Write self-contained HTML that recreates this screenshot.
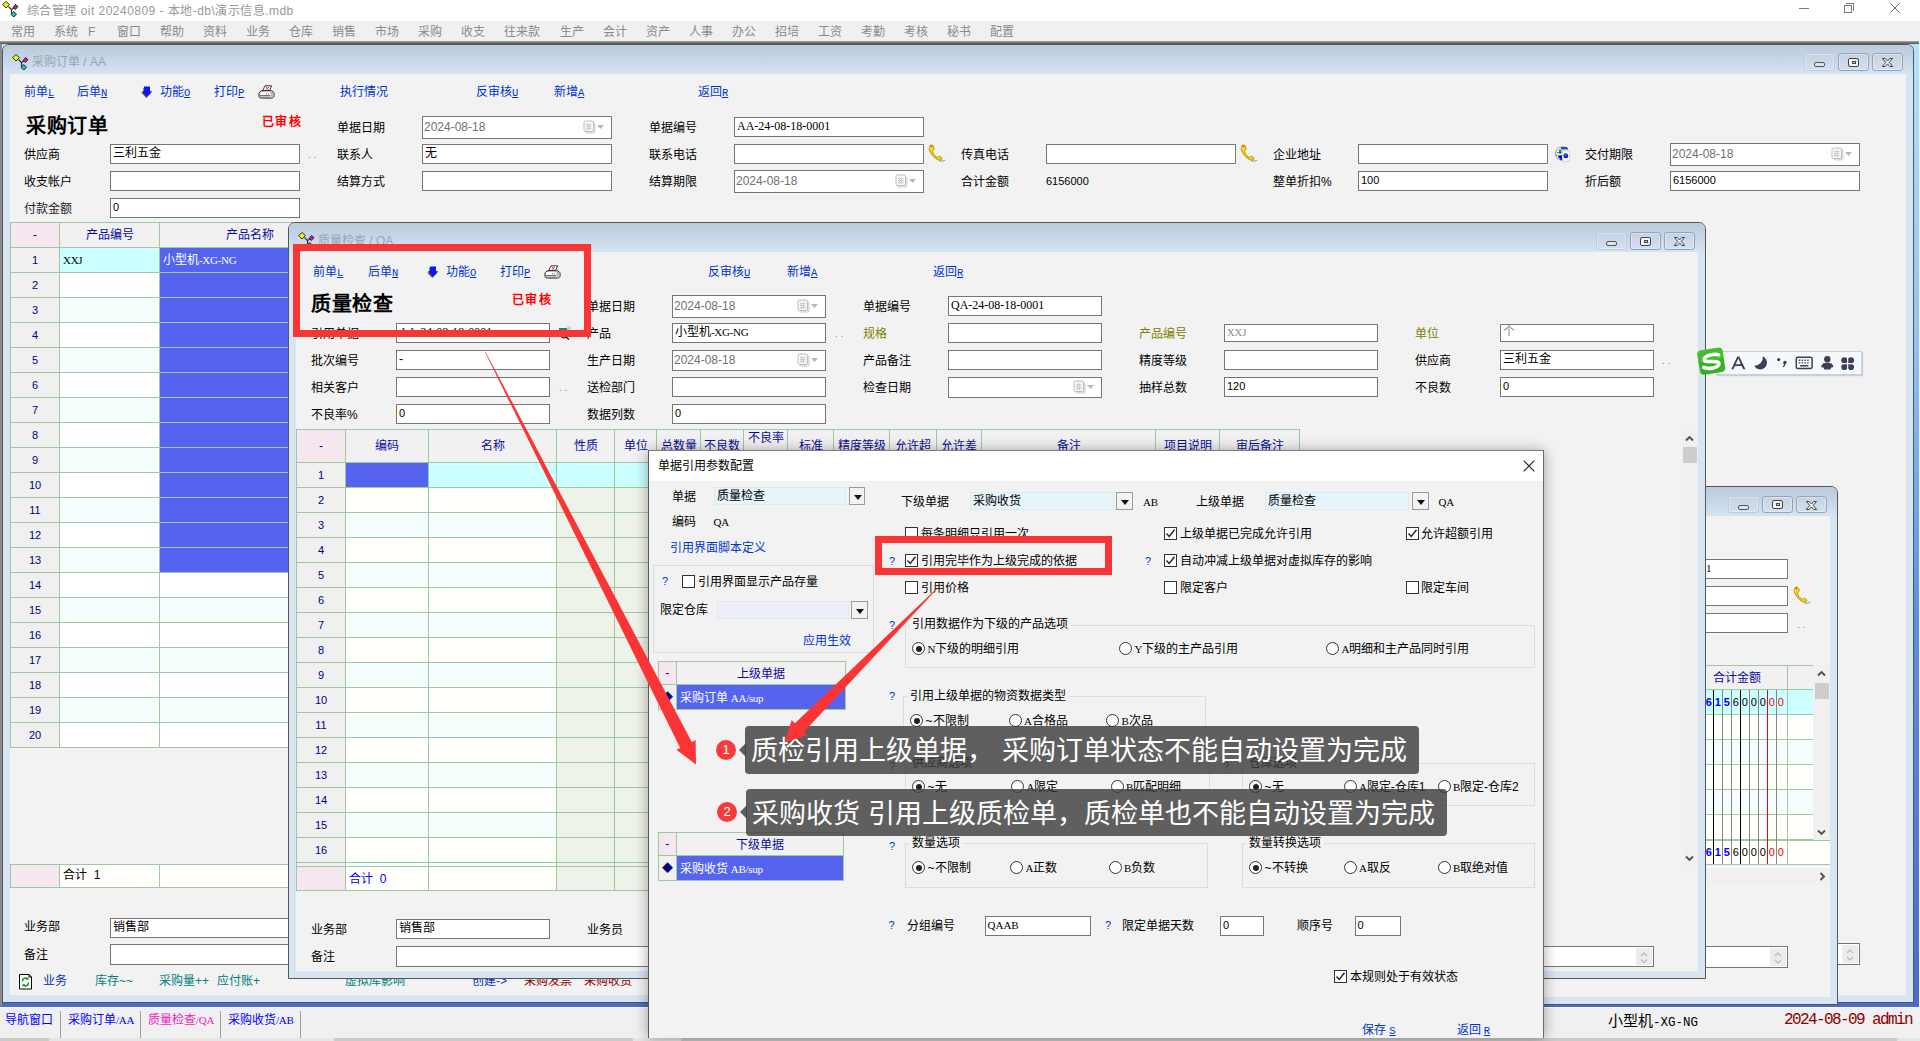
<!DOCTYPE html>
<html lang="zh-CN"><head><meta charset="utf-8"><title>UI</title>
<style>
html,body{margin:0;padding:0}
body{width:1920px;height:1041px;overflow:hidden;position:relative;background:#f0f0f0;font-family:"Liberation Sans",sans-serif;font-size:12px;line-height:16px;color:#000}
div{position:absolute;box-sizing:border-box}
.t{white-space:nowrap;line-height:16px}
.s{font-family:"Liberation Serif",serif;font-size:11px;letter-spacing:-0.3px}
.m{font-family:"Liberation Mono",monospace}
u{text-decoration:underline;font-family:"Liberation Mono",monospace;font-size:10.5px}
.in{border:1px solid #767676;background:#fff;padding-left:2px;white-space:nowrap;overflow:hidden;font-size:12px}
.dt{color:#707070;padding-left:1px}
.dt .cal{position:absolute;right:6px;top:50%;margin-top:-7.5px}
.win{border:1px solid #565656;border-radius:7px 7px 0 0;background:#d7e4f2;overflow:hidden}
.wtitle{background:linear-gradient(#bccbdc,#c9d8e8 55%,#d7e4f2)}
.wc{background:#f2f2f2}
.h1{font-family:"Liberation Serif",serif;font-weight:bold;font-size:20px;line-height:24px;white-space:nowrap;letter-spacing:0.5px}
.red{color:#ff0000;font-weight:bold;white-space:nowrap;letter-spacing:1.4px}
.cb{width:13px;height:13px;border:1px solid #333;background:#fff}
.rb{width:13px;height:13px;border:1px solid #333;background:#fff;border-radius:50%}
.rb i{position:absolute;left:2.5px;top:2.5px;width:6px;height:6px;border-radius:50%;background:#222}
.gb{border:1px solid #dcdcdc}
.q{color:#0033cc;font-size:11px}
.cmb{background:#e6f4fb;border:1px solid #dfe9f0;padding-left:2px;line-height:17px;white-space:nowrap}
.cbtn{border:1px solid #9b9b9b;background:#f2f2f2}
.cbtn:after{content:"";position:absolute;left:4px;top:7px;border:4px solid transparent;border-top:5px solid #111;border-bottom:0}
.call{background:rgba(60,60,60,.81);border-radius:4px;color:#fff;font-size:27px;line-height:51px;white-space:nowrap;padding-left:6px;overflow:hidden}
.num{background:#f53b3b;border-radius:50%;color:#fff;text-align:center;font-size:13px;line-height:20px;width:20px;height:20px}
</style></head>
<body>

<div style="left:0px;top:0px;width:1920px;height:21px;background:#fff"></div>
<div style="left:2px;top:1px;width:17px;height:17px;"><svg width="17" height="17" viewBox="0 0 17 17"><path d="M6.5 5.5L9.5 8.5V12L11 13.5" fill="none" stroke="#333" stroke-width="1.2"/><path d="M9.5 8.5L12.5 6.5" fill="none" stroke="#333" stroke-width="1.2"/><path d="M4 0.5L7.5 3.5L4 7L0.5 3.5Z" fill="#f2f200" stroke="#222" stroke-width="0.9"/><path d="M13.5 3.5L16 5.5L13.5 8.5L11 6.5Z" fill="#e0109a" stroke="#222" stroke-width="0.9"/><path d="M11.5 10.5L14.5 13L12 16L9 13.5Z" fill="#14c8c8" stroke="#222" stroke-width="0.9"/></svg></div>
<div class="t" style="left:27px;top:2.5px;color:#999;letter-spacing:0.47px">综合管理 oit 20240809 - 本地-db\演示信息.mdb</div>
<div style="left:1799px;top:8px;width:10px;height:1px;background:#7a7a7a"></div>
<div style="left:1844px;top:5px;width:8px;height:8px;border:1px solid #7a7a7a"></div>
<div style="left:1846px;top:3px;width:8px;height:8px;border:1px solid #7a7a7a;border-left:0;border-bottom:0"></div>
<svg style="position:absolute;left:1890px;top:3px" width="10" height="10" viewBox="0 0 10 10"><path d="M0.3 0.3L9.7 9.7M9.7 0.3L0.3 9.7" stroke="#6a6a6a" stroke-width="1"/></svg>
<div style="left:0px;top:21px;width:1920px;height:21px;background:#f0f0f0"></div>
<div class="t" style="left:11px;top:23.5px;color:#8a8a8a;">常用</div>
<div class="t" style="left:54px;top:23.5px;color:#8a8a8a;">系统</div>
<div class="t" style="left:88px;top:23.5px;color:#8a8a8a;">F</div>
<div class="t" style="left:117px;top:23.5px;color:#8a8a8a;">窗口</div>
<div class="t" style="left:160px;top:23.5px;color:#8a8a8a;">帮助</div>
<div class="t" style="left:203px;top:23.5px;color:#8a8a8a;">资料</div>
<div class="t" style="left:246px;top:23.5px;color:#8a8a8a;">业务</div>
<div class="t" style="left:289px;top:23.5px;color:#8a8a8a;">仓库</div>
<div class="t" style="left:332px;top:23.5px;color:#8a8a8a;">销售</div>
<div class="t" style="left:375px;top:23.5px;color:#8a8a8a;">市场</div>
<div class="t" style="left:418px;top:23.5px;color:#8a8a8a;">采购</div>
<div class="t" style="left:461px;top:23.5px;color:#8a8a8a;">收支</div>
<div class="t" style="left:504px;top:23.5px;color:#8a8a8a;">往来款</div>
<div class="t" style="left:560px;top:23.5px;color:#8a8a8a;">生产</div>
<div class="t" style="left:603px;top:23.5px;color:#8a8a8a;">会计</div>
<div class="t" style="left:646px;top:23.5px;color:#8a8a8a;">资产</div>
<div class="t" style="left:689px;top:23.5px;color:#8a8a8a;">人事</div>
<div class="t" style="left:732px;top:23.5px;color:#8a8a8a;">办公</div>
<div class="t" style="left:775px;top:23.5px;color:#8a8a8a;">招培</div>
<div class="t" style="left:818px;top:23.5px;color:#8a8a8a;">工资</div>
<div class="t" style="left:861px;top:23.5px;color:#8a8a8a;">考勤</div>
<div class="t" style="left:904px;top:23.5px;color:#8a8a8a;">考核</div>
<div class="t" style="left:947px;top:23.5px;color:#8a8a8a;">秘书</div>
<div class="t" style="left:990px;top:23.5px;color:#8a8a8a;">配置</div>
<div style="left:0px;top:41px;width:1919px;height:2.5px;background:linear-gradient(#a8a8a8,#4e4e4e)"></div>
<div style="left:0px;top:44px;width:1918.5px;height:963px;background:linear-gradient(#aee4fb,#8fc6f3 30%,#5c90dd 60%,#4a6cc8)"></div>
<div style="left:0px;top:44px;width:2px;height:962px;background:#8c8c8c"></div>
<div class="win" style="left:2px;top:43.5px;width:1912px;height:959px"><div class="wtitle" style="left:0;top:0;width:1910px;height:30px"></div><div style="left:9px;top:9px;width:17px;height:17px"><svg width="17" height="17" viewBox="0 0 17 17"><path d="M6.5 5.5L9.5 8.5V12L11 13.5" fill="none" stroke="#333" stroke-width="1.2"/><path d="M9.5 8.5L12.5 6.5" fill="none" stroke="#333" stroke-width="1.2"/><path d="M4 0.5L7.5 3.5L4 7L0.5 3.5Z" fill="#f2f200" stroke="#222" stroke-width="0.9"/><path d="M13.5 3.5L16 5.5L13.5 8.5L11 6.5Z" fill="#e0109a" stroke="#222" stroke-width="0.9"/><path d="M11.5 10.5L14.5 13L12 16L9 13.5Z" fill="#14c8c8" stroke="#222" stroke-width="0.9"/></svg></div><div class="t" style="left:29px;top:9.5px;color:#9aa3ae;">采购订单 / AA</div><div class="wc" style="left:7px;top:29px;width:1896px;height:921px"></div><div style="left:1801px;top:8.5px;width:31px;height:17.5px;border:1px solid #c2ccd9;border-radius:3px;background:linear-gradient(#c6d3e3,#d3dfee);box-shadow:inset 0 0 0 1px rgba(255,255,255,.35)"><div style="left:9px;top:8px;width:11px;height:5px;border:1px solid #555;border-radius:2px;background:#e4e4e4"></div></div><div style="left:1835px;top:8.5px;width:31px;height:17.5px;border:1px solid #95a3bb;border-radius:3px;background:linear-gradient(#c6d3e3,#d3dfee);box-shadow:inset 0 0 0 1px rgba(255,255,255,.35)"><div style="left:9px;top:3.5px;width:11px;height:9px;border:1.5px solid #444;border-radius:2px;background:#f4f4f4"></div><div style="left:12.5px;top:6.5px;width:4px;height:3px;border:1px solid #444;background:#c4cfdf"></div></div><div style="left:1869px;top:8.5px;width:31px;height:17.5px;border:1px solid #95a3bb;border-radius:3px;background:linear-gradient(#c6d3e3,#d3dfee);box-shadow:inset 0 0 0 1px rgba(255,255,255,.35)"><svg style="position:absolute;left:8px;top:3px" width="13" height="11" viewBox="0 0 13 11"><path d="M1.5 1.5h2.8L6.5 4l2.2-2.5h2.8L8.2 5.4l3.5 4.1H8.8L6.5 6.9L4.2 9.5H1.3l3.5-4.1z" fill="#f2f2f2" stroke="#444" stroke-width="1"/></svg></div><div class="t" style="left:21px;top:39.5px;color:#0033cc;">前单<u>L</u></div><div class="t" style="left:74px;top:39.5px;color:#0033cc;">后单<u>N</u></div><div style="left:138px;top:41.5px;width:12px;height:12px;"><svg width="12" height="12" viewBox="0 0 12 12"><path d="M3 1h6v4.7h2.3L6 11.2L0.7 5.7H3z" fill="#5e5e30" transform="translate(-0.7,0.7)"/><path d="M3 0.5h6v4.7h2.3L6 10.7L0.7 5.2H3z" fill="#0a14ff"/></svg></div><div class="t" style="left:157px;top:39.5px;color:#0033cc;">功能<u>O</u></div><div class="t" style="left:211px;top:39.5px;color:#0033cc;">打印<u>P</u></div><div style="left:255px;top:40.5px;width:17px;height:14px;"><svg width="17" height="14" viewBox="0 0 17 14"><path d="M4.5 6L7 0.8h6.5L11.5 6z" fill="#fff" stroke="#222" stroke-width="0.9"/><path d="M8 1.8L10.5 4.8M11 1.8L7.8 4.8" stroke="#e02020" stroke-width="0.9"/><path d="M1 9C1 7 2.5 5.8 5 5.8H12.5c2.2 0 3.5 1.2 3.5 3v2c0 1.4-1 2.2-2.7 2.2H3.5C1.8 13 1 12.2 1 10.8z" fill="#fff" stroke="#111" stroke-width="1"/><path d="M12 6.2c2.3 0 3.6 1 3.6 2.8v1.8c0 1.2-0.8 1.8-2 1.8L12.5 9z" fill="#b9b9b9"/><path d="M2 10.8h10.5" stroke="#333" stroke-width="1"/><path d="M8 8.8h1M10 8.8h1" stroke="#e02020" stroke-width="1"/></svg></div><div class="t" style="left:337px;top:39.5px;color:#0033cc;">执行情况</div><div class="t" style="left:473px;top:39.5px;color:#0033cc;">反审核<u>U</u></div><div class="t" style="left:551px;top:39.5px;color:#0033cc;">新增<u>A</u></div><div class="t" style="left:695px;top:39.5px;color:#0033cc;">返回<u>R</u></div><div class="h1" style="left:23px;top:69.5px">采购订单</div><div class="red" style="left:259px;top:69px;">已审核</div><div class="t" style="left:334px;top:75px;">单据日期</div><div class="in dt" style="left:419px;top:71.5px;width:190px;height:23px;line-height:21px;"><span>2024-08-18</span><svg class="cal" width="22" height="14" viewBox="0 0 22 14"><rect x="2.5" y="2.5" width="9.5" height="10.5" rx="1.5" fill="#ececec" stroke="#cfcfcf"/><rect x="1" y="1" width="9.5" height="10.5" rx="1.5" fill="#f7f7f7" stroke="#bdbdbd"/><path d="M3 4.5h5.5M3 6.5h5.5M3 8.5h5.5M4.5 3.5v6.5M6.5 3.5v6.5" stroke="#cdcdcd" stroke-width="1" fill="none"/><path d="M14 5h7l-3.5 4z" fill="#b8b8b2"/></svg></div><div class="t" style="left:646px;top:75px;">单据编号</div><div class="in" style="left:731px;top:72.5px;width:190px;height:20px;line-height:17px;"><span style="font-family:'Liberation Serif',serif;font-size:12px">AA-24-08-18-0001</span></div><div class="t" style="left:21px;top:102px;">供应商</div><div class="in" style="left:107px;top:99.5px;width:190px;height:20px;line-height:17px;"><span style="">三利五金</span></div><div class="t" style="left:305px;top:103px;color:#888;font-size:10px;line-height:14px;">. .</div><div class="t" style="left:334px;top:102px;">联系人</div><div class="in" style="left:419px;top:99.5px;width:190px;height:20px;line-height:17px;"><span style="">无</span></div><div class="t" style="left:646px;top:102px;">联系电话</div><div class="in" style="left:731px;top:99.5px;width:190px;height:20px;line-height:17px;"></div><div style="left:924px;top:99.5px;width:19px;height:19px;"><svg width="19" height="19" viewBox="0 0 19 19"><path d="M4.5 1.2C2.8 1.6 1.8 3.3 2.3 5.5C3.2 9.2 6.6 13.6 10.2 15.5C12 16.5 13.8 16.3 14.6 15.2C15.2 14.3 14.6 13.3 13.5 12.7C12.6 12.2 11.8 12.3 11.2 12.9C10.7 13.4 10 13.3 9.3 12.8C7.6 11.5 6.3 9.6 5.7 7.7C5.5 6.9 5.7 6.3 6.3 6C7.1 5.6 7.4 4.8 7.1 3.8C6.7 2.3 5.7 1 4.5 1.2Z" fill="#f7d416" stroke="#b88a00" stroke-width="0.9"/><path d="M4.5 1.8C3.6 2.2 3.1 3.3 3.3 4.7" stroke="#fff6a8" stroke-width="1" fill="none"/><path d="M12 16.8C14.5 17.6 16.8 17 18.3 16" stroke="#8a8a8a" stroke-width="0.9" fill="none"/><circle cx="4.2" cy="2.1" r="1.3" fill="#e86a1c"/></svg></div><div class="t" style="left:958px;top:102px;">传真电话</div><div class="in" style="left:1043px;top:99.5px;width:190px;height:20px;line-height:17px;"></div><div style="left:1236px;top:99.5px;width:19px;height:19px;"><svg width="19" height="19" viewBox="0 0 19 19"><path d="M4.5 1.2C2.8 1.6 1.8 3.3 2.3 5.5C3.2 9.2 6.6 13.6 10.2 15.5C12 16.5 13.8 16.3 14.6 15.2C15.2 14.3 14.6 13.3 13.5 12.7C12.6 12.2 11.8 12.3 11.2 12.9C10.7 13.4 10 13.3 9.3 12.8C7.6 11.5 6.3 9.6 5.7 7.7C5.5 6.9 5.7 6.3 6.3 6C7.1 5.6 7.4 4.8 7.1 3.8C6.7 2.3 5.7 1 4.5 1.2Z" fill="#f7d416" stroke="#b88a00" stroke-width="0.9"/><path d="M4.5 1.8C3.6 2.2 3.1 3.3 3.3 4.7" stroke="#fff6a8" stroke-width="1" fill="none"/><path d="M12 16.8C14.5 17.6 16.8 17 18.3 16" stroke="#8a8a8a" stroke-width="0.9" fill="none"/><circle cx="4.2" cy="2.1" r="1.3" fill="#e86a1c"/></svg></div><div class="t" style="left:1270px;top:102px;">企业地址</div><div class="in" style="left:1355px;top:99.5px;width:190px;height:20px;line-height:17px;"></div><div style="left:1552px;top:101.5px;width:16px;height:16px;"><svg width="16" height="16" viewBox="0 0 16 16"><circle cx="7.2" cy="7.6" r="6.7" fill="#f6f6f6" stroke="#8a8a8a" stroke-width="0.9"/><path d="M6.2 1.3L11.8 1.1L13 3L9.5 3.4L6 3.2Z" fill="#0a14ee"/><path d="M7.5 1.7h3.5v1.2h-3.5z" fill="#0f8a2a"/><path d="M4 3.6h2.2v1.8H4z" fill="#0f8a2a"/><path d="M2.3 6h1.2v1H2.3zM4.2 5.5h2.2v1.6H4.2z" fill="#0a14ee"/><path d="M3.5 6.8h2.8v0.8H3.5z" fill="#0f8a2a"/><path d="M1 8.3h1.2v0.9H1z" fill="#14a0a0"/><path d="M2.3 9.7L7.2 9v5.3L5.7 14Z" fill="#0a14ee"/><rect x="7.3" y="4.4" width="7.5" height="10.8" fill="#fdfdfd" stroke="#bdbdbd" stroke-width="0.6"/><path d="M8.1 5.2h1v1h-1zM10.2 4.4h1v1h-1zM10.2 6.3h1v1h-1zM8.1 7.3h1v1h-1zM8.1 11.3h1v1h-1zM10.2 12.2h1v1h-1zM8.1 13.2h1v1h-1zM12.3 13.2h1v1h-1z" fill="#ffee00"/><circle cx="10.9" cy="9.9" r="2.4" fill="#0a14ee"/><path d="M8.5 9.8a2.4 2.4 0 0 1 3.6-2" fill="none" stroke="#14a0a0" stroke-width="1"/><path d="M10 9.3L11.8 8.2L11.3 9.8Z" fill="#fff"/></svg></div><div class="t" style="left:1582px;top:102px;">交付期限</div><div class="in dt" style="left:1667px;top:98.5px;width:190px;height:23px;line-height:21px;"><span>2024-08-18</span><svg class="cal" width="22" height="14" viewBox="0 0 22 14"><rect x="2.5" y="2.5" width="9.5" height="10.5" rx="1.5" fill="#ececec" stroke="#cfcfcf"/><rect x="1" y="1" width="9.5" height="10.5" rx="1.5" fill="#f7f7f7" stroke="#bdbdbd"/><path d="M3 4.5h5.5M3 6.5h5.5M3 8.5h5.5M4.5 3.5v6.5M6.5 3.5v6.5" stroke="#cdcdcd" stroke-width="1" fill="none"/><path d="M14 5h7l-3.5 4z" fill="#b8b8b2"/></svg></div><div class="t" style="left:21px;top:129px;">收支帐户</div><div class="in" style="left:107px;top:126.5px;width:190px;height:20px;line-height:17px;"></div><div class="t" style="left:334px;top:129px;">结算方式</div><div class="in" style="left:419px;top:126.5px;width:190px;height:20px;line-height:17px;"></div><div class="t" style="left:646px;top:129px;">结算期限</div><div class="in dt" style="left:731px;top:125.5px;width:190px;height:23px;line-height:21px;"><span>2024-08-18</span><svg class="cal" width="22" height="14" viewBox="0 0 22 14"><rect x="2.5" y="2.5" width="9.5" height="10.5" rx="1.5" fill="#ececec" stroke="#cfcfcf"/><rect x="1" y="1" width="9.5" height="10.5" rx="1.5" fill="#f7f7f7" stroke="#bdbdbd"/><path d="M3 4.5h5.5M3 6.5h5.5M3 8.5h5.5M4.5 3.5v6.5M6.5 3.5v6.5" stroke="#cdcdcd" stroke-width="1" fill="none"/><path d="M14 5h7l-3.5 4z" fill="#b8b8b2"/></svg></div><div class="t" style="left:958px;top:129px;">合计金额</div><div class="t" style="left:1043px;top:129.5px;font-size:11px;line-height:15px;">6156000</div><div class="t" style="left:1270px;top:129px;">整单折扣%</div><div class="in" style="left:1355px;top:126.5px;width:190px;height:20px;line-height:17px;"><span style="font-size:11px">100</span></div><div class="t" style="left:1582px;top:129px;">折后额</div><div class="in" style="left:1667px;top:126.5px;width:190px;height:20px;line-height:17px;"><span style="font-size:11px">6156000</span></div><div class="t" style="left:21px;top:156px;color:#222;">付款金额</div><div class="in" style="left:107px;top:153.5px;width:190px;height:20px;line-height:17px;"><span style="font-size:11px">0</span></div><div style="left:7px;top:177.5px;width:291px;height:526px;background:#9fc8a0"></div><div style="left:8px;top:178.5px;width:48px;height:24px;background:#f5e6ef;text-align:center;color:#0a0aa0;line-height:24px;overflow:hidden;white-space:nowrap;">-</div><div style="left:57px;top:178.5px;width:99px;height:24px;background:#f1f1f1;text-align:center;color:#0a0aa0;line-height:24px;overflow:hidden;white-space:nowrap;">产品编号</div><div style="left:157px;top:178.5px;width:140px;height:24px;background:#f1f1f1;text-align:center;color:#0a0aa0;line-height:24px;overflow:hidden;white-space:nowrap;"><span style="padding-left:39px">产品名称</span></div><div style="left:8px;top:203.5px;width:48px;height:24px;background:#f0f0f0;line-height:24px;white-space:nowrap;overflow:hidden;text-align:center;color:#00007f;font-size:11px;">1</div><div style="left:57px;top:203.5px;width:99px;height:24px;background:#ccffff;line-height:24px;white-space:nowrap;overflow:hidden;padding-left:3px;"><span class="s">XXJ</span></div><div style="left:157px;top:203.5px;width:140px;height:24px;background:#5564ee;line-height:24px;white-space:nowrap;overflow:hidden;padding-left:3px;color:#fff;">小型机<span class="s">-XG-NG</span></div><div style="left:8px;top:228.5px;width:48px;height:24px;background:#f0f0f0;line-height:24px;white-space:nowrap;overflow:hidden;text-align:center;color:#00007f;font-size:11px;">2</div><div style="left:57px;top:228.5px;width:99px;height:24px;background:#fff;line-height:24px;white-space:nowrap;overflow:hidden;"></div><div style="left:157px;top:228.5px;width:140px;height:24px;background:#5564ee;line-height:24px;white-space:nowrap;overflow:hidden;"></div><div style="left:8px;top:253.5px;width:48px;height:24px;background:#f0f0f0;line-height:24px;white-space:nowrap;overflow:hidden;text-align:center;color:#00007f;font-size:11px;">3</div><div style="left:57px;top:253.5px;width:99px;height:24px;background:#f5fdfd;line-height:24px;white-space:nowrap;overflow:hidden;"></div><div style="left:157px;top:253.5px;width:140px;height:24px;background:#5564ee;line-height:24px;white-space:nowrap;overflow:hidden;"></div><div style="left:8px;top:278.5px;width:48px;height:24px;background:#f0f0f0;line-height:24px;white-space:nowrap;overflow:hidden;text-align:center;color:#00007f;font-size:11px;">4</div><div style="left:57px;top:278.5px;width:99px;height:24px;background:#fff;line-height:24px;white-space:nowrap;overflow:hidden;"></div><div style="left:157px;top:278.5px;width:140px;height:24px;background:#5564ee;line-height:24px;white-space:nowrap;overflow:hidden;"></div><div style="left:8px;top:303.5px;width:48px;height:24px;background:#f0f0f0;line-height:24px;white-space:nowrap;overflow:hidden;text-align:center;color:#00007f;font-size:11px;">5</div><div style="left:57px;top:303.5px;width:99px;height:24px;background:#f5fdfd;line-height:24px;white-space:nowrap;overflow:hidden;"></div><div style="left:157px;top:303.5px;width:140px;height:24px;background:#5564ee;line-height:24px;white-space:nowrap;overflow:hidden;"></div><div style="left:8px;top:328.5px;width:48px;height:24px;background:#f0f0f0;line-height:24px;white-space:nowrap;overflow:hidden;text-align:center;color:#00007f;font-size:11px;">6</div><div style="left:57px;top:328.5px;width:99px;height:24px;background:#fff;line-height:24px;white-space:nowrap;overflow:hidden;"></div><div style="left:157px;top:328.5px;width:140px;height:24px;background:#5564ee;line-height:24px;white-space:nowrap;overflow:hidden;"></div><div style="left:8px;top:353.5px;width:48px;height:24px;background:#f0f0f0;line-height:24px;white-space:nowrap;overflow:hidden;text-align:center;color:#00007f;font-size:11px;">7</div><div style="left:57px;top:353.5px;width:99px;height:24px;background:#f5fdfd;line-height:24px;white-space:nowrap;overflow:hidden;"></div><div style="left:157px;top:353.5px;width:140px;height:24px;background:#5564ee;line-height:24px;white-space:nowrap;overflow:hidden;"></div><div style="left:8px;top:378.5px;width:48px;height:24px;background:#f0f0f0;line-height:24px;white-space:nowrap;overflow:hidden;text-align:center;color:#00007f;font-size:11px;">8</div><div style="left:57px;top:378.5px;width:99px;height:24px;background:#fff;line-height:24px;white-space:nowrap;overflow:hidden;"></div><div style="left:157px;top:378.5px;width:140px;height:24px;background:#5564ee;line-height:24px;white-space:nowrap;overflow:hidden;"></div><div style="left:8px;top:403.5px;width:48px;height:24px;background:#f0f0f0;line-height:24px;white-space:nowrap;overflow:hidden;text-align:center;color:#00007f;font-size:11px;">9</div><div style="left:57px;top:403.5px;width:99px;height:24px;background:#f5fdfd;line-height:24px;white-space:nowrap;overflow:hidden;"></div><div style="left:157px;top:403.5px;width:140px;height:24px;background:#5564ee;line-height:24px;white-space:nowrap;overflow:hidden;"></div><div style="left:8px;top:428.5px;width:48px;height:24px;background:#f0f0f0;line-height:24px;white-space:nowrap;overflow:hidden;text-align:center;color:#00007f;font-size:11px;">10</div><div style="left:57px;top:428.5px;width:99px;height:24px;background:#fff;line-height:24px;white-space:nowrap;overflow:hidden;"></div><div style="left:157px;top:428.5px;width:140px;height:24px;background:#5564ee;line-height:24px;white-space:nowrap;overflow:hidden;"></div><div style="left:8px;top:453.5px;width:48px;height:24px;background:#f0f0f0;line-height:24px;white-space:nowrap;overflow:hidden;text-align:center;color:#00007f;font-size:11px;">11</div><div style="left:57px;top:453.5px;width:99px;height:24px;background:#f5fdfd;line-height:24px;white-space:nowrap;overflow:hidden;"></div><div style="left:157px;top:453.5px;width:140px;height:24px;background:#5564ee;line-height:24px;white-space:nowrap;overflow:hidden;"></div><div style="left:8px;top:478.5px;width:48px;height:24px;background:#f0f0f0;line-height:24px;white-space:nowrap;overflow:hidden;text-align:center;color:#00007f;font-size:11px;">12</div><div style="left:57px;top:478.5px;width:99px;height:24px;background:#fff;line-height:24px;white-space:nowrap;overflow:hidden;"></div><div style="left:157px;top:478.5px;width:140px;height:24px;background:#5564ee;line-height:24px;white-space:nowrap;overflow:hidden;"></div><div style="left:8px;top:503.5px;width:48px;height:24px;background:#f0f0f0;line-height:24px;white-space:nowrap;overflow:hidden;text-align:center;color:#00007f;font-size:11px;">13</div><div style="left:57px;top:503.5px;width:99px;height:24px;background:#f5fdfd;line-height:24px;white-space:nowrap;overflow:hidden;"></div><div style="left:157px;top:503.5px;width:140px;height:24px;background:#5564ee;line-height:24px;white-space:nowrap;overflow:hidden;"></div><div style="left:8px;top:528.5px;width:48px;height:24px;background:#f0f0f0;line-height:24px;white-space:nowrap;overflow:hidden;text-align:center;color:#00007f;font-size:11px;">14</div><div style="left:57px;top:528.5px;width:99px;height:24px;background:#fff;line-height:24px;white-space:nowrap;overflow:hidden;"></div><div style="left:157px;top:528.5px;width:140px;height:24px;background:#fff;line-height:24px;white-space:nowrap;overflow:hidden;"></div><div style="left:8px;top:553.5px;width:48px;height:24px;background:#f0f0f0;line-height:24px;white-space:nowrap;overflow:hidden;text-align:center;color:#00007f;font-size:11px;">15</div><div style="left:57px;top:553.5px;width:99px;height:24px;background:#f5fdfd;line-height:24px;white-space:nowrap;overflow:hidden;"></div><div style="left:157px;top:553.5px;width:140px;height:24px;background:#f5fdfd;line-height:24px;white-space:nowrap;overflow:hidden;"></div><div style="left:8px;top:578.5px;width:48px;height:24px;background:#f0f0f0;line-height:24px;white-space:nowrap;overflow:hidden;text-align:center;color:#00007f;font-size:11px;">16</div><div style="left:57px;top:578.5px;width:99px;height:24px;background:#fff;line-height:24px;white-space:nowrap;overflow:hidden;"></div><div style="left:157px;top:578.5px;width:140px;height:24px;background:#fff;line-height:24px;white-space:nowrap;overflow:hidden;"></div><div style="left:8px;top:603.5px;width:48px;height:24px;background:#f0f0f0;line-height:24px;white-space:nowrap;overflow:hidden;text-align:center;color:#00007f;font-size:11px;">17</div><div style="left:57px;top:603.5px;width:99px;height:24px;background:#f5fdfd;line-height:24px;white-space:nowrap;overflow:hidden;"></div><div style="left:157px;top:603.5px;width:140px;height:24px;background:#f5fdfd;line-height:24px;white-space:nowrap;overflow:hidden;"></div><div style="left:8px;top:628.5px;width:48px;height:24px;background:#f0f0f0;line-height:24px;white-space:nowrap;overflow:hidden;text-align:center;color:#00007f;font-size:11px;">18</div><div style="left:57px;top:628.5px;width:99px;height:24px;background:#fff;line-height:24px;white-space:nowrap;overflow:hidden;"></div><div style="left:157px;top:628.5px;width:140px;height:24px;background:#fff;line-height:24px;white-space:nowrap;overflow:hidden;"></div><div style="left:8px;top:653.5px;width:48px;height:24px;background:#f0f0f0;line-height:24px;white-space:nowrap;overflow:hidden;text-align:center;color:#00007f;font-size:11px;">19</div><div style="left:57px;top:653.5px;width:99px;height:24px;background:#f5fdfd;line-height:24px;white-space:nowrap;overflow:hidden;"></div><div style="left:157px;top:653.5px;width:140px;height:24px;background:#f5fdfd;line-height:24px;white-space:nowrap;overflow:hidden;"></div><div style="left:8px;top:678.5px;width:48px;height:24px;background:#f0f0f0;line-height:24px;white-space:nowrap;overflow:hidden;text-align:center;color:#00007f;font-size:11px;">20</div><div style="left:57px;top:678.5px;width:99px;height:24px;background:#fff;line-height:24px;white-space:nowrap;overflow:hidden;"></div><div style="left:157px;top:678.5px;width:140px;height:24px;background:#fff;line-height:24px;white-space:nowrap;overflow:hidden;"></div><div style="left:7px;top:819.5px;width:291px;height:24px;background:#9fc8a0"></div><div style="left:8px;top:820.5px;width:48px;height:22px;background:#f5e6ef"></div><div style="left:57px;top:820.5px;width:99px;height:22px;background:#fffffb;padding-left:3px;line-height:21px">合计&nbsp;&nbsp;1</div><div style="left:157px;top:820.5px;width:141px;height:22px;background:#fffffb"></div><div class="t" style="left:21px;top:874.5px;">业务部</div><div class="in" style="left:107px;top:873px;width:190px;height:20px;line-height:17px;"><span style="">销售部</span></div><div class="t" style="left:21px;top:902px;">备注</div><div class="in" style="left:107px;top:899.5px;width:400px;height:21px;line-height:18px;"></div><div style="left:16px;top:929.5px;width:14px;height:16px;"><svg width="14" height="16" viewBox="0 0 14 16"><path d="M0.5 0.5h9.5l2.5 2.5v12h-12z" fill="#fff" stroke="#000" stroke-width="1"/><path d="M10 0.5v2.5h2.5" fill="none" stroke="#000" stroke-width="1"/><path d="M3.5 7.5a3 3 0 0 1 5 -2.6" fill="none" stroke="#0a8a0a" stroke-width="1.4"/><path d="M9.6 3l-0.2 2.9l-2.7 -0.7z" fill="#0a8a0a"/><path d="M9.5 8.5a3 3 0 0 1 -5 2.6" fill="none" stroke="#0a8a0a" stroke-width="1.4"/><path d="M3.4 13l0.2 -2.9l2.7 0.7z" fill="#0a8a0a"/></svg></div><div class="t" style="left:40px;top:928px;color:#0033cc;">业务</div><div class="t" style="left:92px;top:928px;color:#008080;">库存~~</div><div class="t" style="left:156px;top:928px;color:#008080;">采购量++</div><div class="t" style="left:214px;top:928px;color:#008080;">应付账+</div><div class="t" style="left:342px;top:928px;color:#008080;">虚拟库影响</div><div class="t" style="left:469px;top:928px;color:#0033cc;">创建-></div><div class="t" style="left:521px;top:928px;color:#8b0000;">采购发票</div><div class="t" style="left:581px;top:928px;color:#8b0000;">采购收货</div><div style="left:1697px;top:898.5px;width:160px;height:22px;border:1px solid #767676;background:#fff"></div><div style="left:1839px;top:900.5px;width:16px;height:18px;background:#ececec;color:#b0b0b0;font-size:9px;line-height:9px;text-align:center"><svg width="16" height="18" viewBox="0 0 16 18"><path d="M5 8L8 5L11 8M5 12L8 15L11 12" fill="none" stroke="#bdbdbd" stroke-width="1.3"/></svg></div></div>
<div class="win" style="left:1400px;top:485.5px;width:438px;height:519.5px"><div class="wtitle" style="left:0;top:0;width:436px;height:30px"></div><div style="left:9px;top:9px;width:17px;height:17px"><svg width="17" height="17" viewBox="0 0 17 17"><path d="M6.5 5.5L9.5 8.5V12L11 13.5" fill="none" stroke="#333" stroke-width="1.2"/><path d="M9.5 8.5L12.5 6.5" fill="none" stroke="#333" stroke-width="1.2"/><path d="M4 0.5L7.5 3.5L4 7L0.5 3.5Z" fill="#f2f200" stroke="#222" stroke-width="0.9"/><path d="M13.5 3.5L16 5.5L13.5 8.5L11 6.5Z" fill="#e0109a" stroke="#222" stroke-width="0.9"/><path d="M11.5 10.5L14.5 13L12 16L9 13.5Z" fill="#14c8c8" stroke="#222" stroke-width="0.9"/></svg></div><div class="t" style="left:29px;top:9.5px;color:#9aa3ae;">采购收货 / AB</div><div class="wc" style="left:7px;top:29px;width:422px;height:481.5px"></div><div style="left:327px;top:9px;width:31px;height:17.5px;border:1px solid #c2ccd9;border-radius:3px;background:linear-gradient(#c6d3e3,#d3dfee);box-shadow:inset 0 0 0 1px rgba(255,255,255,.35)"><div style="left:9px;top:8px;width:11px;height:5px;border:1px solid #555;border-radius:2px;background:#e4e4e4"></div></div><div style="left:361px;top:9px;width:31px;height:17.5px;border:1px solid #95a3bb;border-radius:3px;background:linear-gradient(#c6d3e3,#d3dfee);box-shadow:inset 0 0 0 1px rgba(255,255,255,.35)"><div style="left:9px;top:3.5px;width:11px;height:9px;border:1.5px solid #444;border-radius:2px;background:#f4f4f4"></div><div style="left:12.5px;top:6.5px;width:4px;height:3px;border:1px solid #444;background:#c4cfdf"></div></div><div style="left:395px;top:9px;width:31px;height:17.5px;border:1px solid #95a3bb;border-radius:3px;background:linear-gradient(#c6d3e3,#d3dfee);box-shadow:inset 0 0 0 1px rgba(255,255,255,.35)"><svg style="position:absolute;left:8px;top:3px" width="13" height="11" viewBox="0 0 13 11"><path d="M1.5 1.5h2.8L6.5 4l2.2-2.5h2.8L8.2 5.4l3.5 4.1H8.8L6.5 6.9L4.2 9.5H1.3l3.5-4.1z" fill="#f2f2f2" stroke="#444" stroke-width="1"/></svg></div><div class="in" style="left:199px;top:72.5px;width:188px;height:20px;line-height:17px;"><span style=""><span style="position:absolute;left:105px" class="s">1</span></span></div><div class="in" style="left:199px;top:99.5px;width:188px;height:20px;line-height:17px;"></div><div style="left:391px;top:99.5px;width:19px;height:19px;"><svg width="19" height="19" viewBox="0 0 19 19"><path d="M4.5 1.2C2.8 1.6 1.8 3.3 2.3 5.5C3.2 9.2 6.6 13.6 10.2 15.5C12 16.5 13.8 16.3 14.6 15.2C15.2 14.3 14.6 13.3 13.5 12.7C12.6 12.2 11.8 12.3 11.2 12.9C10.7 13.4 10 13.3 9.3 12.8C7.6 11.5 6.3 9.6 5.7 7.7C5.5 6.9 5.7 6.3 6.3 6C7.1 5.6 7.4 4.8 7.1 3.8C6.7 2.3 5.7 1 4.5 1.2Z" fill="#f7d416" stroke="#b88a00" stroke-width="0.9"/><path d="M4.5 1.8C3.6 2.2 3.1 3.3 3.3 4.7" stroke="#fff6a8" stroke-width="1" fill="none"/><path d="M12 16.8C14.5 17.6 16.8 17 18.3 16" stroke="#8a8a8a" stroke-width="0.9" fill="none"/><circle cx="4.2" cy="2.1" r="1.3" fill="#e86a1c"/></svg></div><div class="in" style="left:199px;top:126.5px;width:188px;height:20px;line-height:17px;"></div><div class="t" style="left:396px;top:131px;color:#888;font-size:10px;line-height:14px;">. .</div><div style="left:199px;top:178.5px;width:213px;height:176px;background:#9fc8a0"></div><div style="left:199px;top:179.5px;width:187px;height:23px;background:#f1f1f1;color:#0a0aa0;line-height:24px"><span style="position:absolute;left:113px">合计金额</span></div><div style="left:387px;top:179.5px;width:25px;height:23px;background:#f1f1f1"></div><div style="left:199px;top:203.5px;width:187px;height:24px;background:#ccffff"></div><div style="left:387px;top:203.5px;width:25px;height:24px;background:#ccffff"></div><div style="left:199px;top:228.5px;width:187px;height:24px;background:#fffffb"></div><div style="left:387px;top:228.5px;width:25px;height:24px;background:#fffffb"></div><div style="left:199px;top:253.5px;width:187px;height:24px;background:#f5fdfd"></div><div style="left:387px;top:253.5px;width:25px;height:24px;background:#f5fdfd"></div><div style="left:199px;top:278.5px;width:187px;height:24px;background:#fffffb"></div><div style="left:387px;top:278.5px;width:25px;height:24px;background:#fffffb"></div><div style="left:199px;top:303.5px;width:187px;height:24px;background:#f5fdfd"></div><div style="left:387px;top:303.5px;width:25px;height:24px;background:#f5fdfd"></div><div style="left:199px;top:328.5px;width:187px;height:24px;background:#fffffb"></div><div style="left:387px;top:328.5px;width:25px;height:24px;background:#fffffb"></div><div style="left:199px;top:353.5px;width:230px;height:25px;background:#9fc8a0"></div><div style="left:199px;top:354.5px;width:187px;height:23px;background:#fffffb"></div><div style="left:387px;top:354.5px;width:42px;height:23px;background:#fffffb"></div><div style="left:303px;top:203.5px;width:1px;height:174px;background:#858585"></div><div style="left:312px;top:203.5px;width:1px;height:174px;background:#000"></div><div style="left:321px;top:203.5px;width:1px;height:174px;background:#858585"></div><div style="left:330px;top:203.5px;width:1px;height:174px;background:#858585"></div><div style="left:339px;top:203.5px;width:1px;height:174px;background:#000"></div><div style="left:348px;top:203.5px;width:1px;height:174px;background:#858585"></div><div style="left:357px;top:203.5px;width:1px;height:174px;background:#858585"></div><div style="left:366px;top:203.5px;width:1px;height:174px;background:#ff0000"></div><div style="left:375px;top:203.5px;width:1px;height:174px;background:#858585"></div><div class="t" style="left:304.8px;top:208px;color:#0000ff;font-size:11px;line-height:15px;font-weight:bold;">6</div><div class="t" style="left:313.8px;top:208px;color:#0000ff;font-size:11px;line-height:15px;font-weight:bold;">1</div><div class="t" style="left:322.8px;top:208px;color:#0000ff;font-size:11px;line-height:15px;font-weight:bold;">5</div><div class="t" style="left:331.8px;top:208px;color:#000;font-size:11px;line-height:15px;">6</div><div class="t" style="left:340.8px;top:208px;color:#000;font-size:11px;line-height:15px;">0</div><div class="t" style="left:349.8px;top:208px;color:#000;font-size:11px;line-height:15px;">0</div><div class="t" style="left:358.8px;top:208px;color:#000;font-size:11px;line-height:15px;">0</div><div class="t" style="left:367.8px;top:208px;color:#ff0000;font-size:11px;line-height:15px;">0</div><div class="t" style="left:376.8px;top:208px;color:#ff0000;font-size:11px;line-height:15px;">0</div><div class="t" style="left:304.8px;top:358.5px;color:#0000ff;font-size:11px;line-height:15px;font-weight:bold;">6</div><div class="t" style="left:313.8px;top:358.5px;color:#0000ff;font-size:11px;line-height:15px;font-weight:bold;">1</div><div class="t" style="left:322.8px;top:358.5px;color:#0000ff;font-size:11px;line-height:15px;font-weight:bold;">5</div><div class="t" style="left:331.8px;top:358.5px;color:#000;font-size:11px;line-height:15px;">6</div><div class="t" style="left:340.8px;top:358.5px;color:#000;font-size:11px;line-height:15px;">0</div><div class="t" style="left:349.8px;top:358.5px;color:#000;font-size:11px;line-height:15px;">0</div><div class="t" style="left:358.8px;top:358.5px;color:#000;font-size:11px;line-height:15px;">0</div><div class="t" style="left:367.8px;top:358.5px;color:#ff0000;font-size:11px;line-height:15px;">0</div><div class="t" style="left:376.8px;top:358.5px;color:#ff0000;font-size:11px;line-height:15px;">0</div><div style="left:412px;top:178.5px;width:17px;height:175px;background:#f0f0f0"></div><svg style="position:absolute;left:416px;top:183.5px" width="9" height="7" viewBox="0 0 9 7"><path d="M1 5.5L4.5 2L8 5.5" fill="none" stroke="#505050" stroke-width="1.9"/></svg><div style="left:413.5px;top:196px;width:14.5px;height:16px;background:#cdcdcd"></div><svg style="position:absolute;left:416px;top:342px" width="9" height="7" viewBox="0 0 9 7"><path d="M1 1.5L4.5 5L8 1.5" fill="none" stroke="#505050" stroke-width="1.9"/></svg><div style="left:199px;top:379.5px;width:230px;height:2px;background:#fbfbfb"></div><div style="left:199px;top:381.5px;width:230px;height:16px;background:#f0f0f0"></div><svg style="position:absolute;left:417.5px;top:385.5px" width="7" height="9" viewBox="0 0 7 9"><path d="M1.5 1L5 4.5L1.5 8" fill="none" stroke="#505050" stroke-width="1.9"/></svg><div style="left:199px;top:459.5px;width:188px;height:22px;border:1px solid #767676;background:#fff"></div><div style="left:369px;top:461.5px;width:16px;height:18px;background:#ececec"><svg width="16" height="18" viewBox="0 0 16 18"><path d="M5 8L8 5L11 8M5 12L8 15L11 12" fill="none" stroke="#bdbdbd" stroke-width="1.3"/></svg></div></div>
<div class="win" style="left:288px;top:222px;width:1418px;height:757px"><div class="wtitle" style="left:0;top:0;width:1416px;height:30px"></div><div style="left:9px;top:9px;width:17px;height:17px"><svg width="17" height="17" viewBox="0 0 17 17"><path d="M6.5 5.5L9.5 8.5V12L11 13.5" fill="none" stroke="#333" stroke-width="1.2"/><path d="M9.5 8.5L12.5 6.5" fill="none" stroke="#333" stroke-width="1.2"/><path d="M4 0.5L7.5 3.5L4 7L0.5 3.5Z" fill="#f2f200" stroke="#222" stroke-width="0.9"/><path d="M13.5 3.5L16 5.5L13.5 8.5L11 6.5Z" fill="#e0109a" stroke="#222" stroke-width="0.9"/><path d="M11.5 10.5L14.5 13L12 16L9 13.5Z" fill="#14c8c8" stroke="#222" stroke-width="0.9"/></svg></div><div class="t" style="left:29px;top:9.5px;color:#9aa3ae;">质量检查 / QA</div><div class="wc" style="left:7px;top:29px;width:1402px;height:719px"></div><div style="left:1307px;top:9px;width:31px;height:17.5px;border:1px solid #c2ccd9;border-radius:3px;background:linear-gradient(#c6d3e3,#d3dfee);box-shadow:inset 0 0 0 1px rgba(255,255,255,.35)"><div style="left:9px;top:8px;width:11px;height:5px;border:1px solid #555;border-radius:2px;background:#e4e4e4"></div></div><div style="left:1341px;top:9px;width:31px;height:17.5px;border:1px solid #95a3bb;border-radius:3px;background:linear-gradient(#c6d3e3,#d3dfee);box-shadow:inset 0 0 0 1px rgba(255,255,255,.35)"><div style="left:9px;top:3.5px;width:11px;height:9px;border:1.5px solid #444;border-radius:2px;background:#f4f4f4"></div><div style="left:12.5px;top:6.5px;width:4px;height:3px;border:1px solid #444;background:#c4cfdf"></div></div><div style="left:1375px;top:9px;width:31px;height:17.5px;border:1px solid #95a3bb;border-radius:3px;background:linear-gradient(#c6d3e3,#d3dfee);box-shadow:inset 0 0 0 1px rgba(255,255,255,.35)"><svg style="position:absolute;left:8px;top:3px" width="13" height="11" viewBox="0 0 13 11"><path d="M1.5 1.5h2.8L6.5 4l2.2-2.5h2.8L8.2 5.4l3.5 4.1H8.8L6.5 6.9L4.2 9.5H1.3l3.5-4.1z" fill="#f2f2f2" stroke="#444" stroke-width="1"/></svg></div><div class="t" style="left:24px;top:40.5px;color:#0033cc;">前单<u>L</u></div><div class="t" style="left:79px;top:40.5px;color:#0033cc;">后单<u>N</u></div><div style="left:138px;top:42.5px;width:12px;height:12px;"><svg width="12" height="12" viewBox="0 0 12 12"><path d="M3 1h6v4.7h2.3L6 11.2L0.7 5.7H3z" fill="#5e5e30" transform="translate(-0.7,0.7)"/><path d="M3 0.5h6v4.7h2.3L6 10.7L0.7 5.2H3z" fill="#0a14ff"/></svg></div><div class="t" style="left:157px;top:40.5px;color:#0033cc;">功能<u>O</u></div><div class="t" style="left:211px;top:40.5px;color:#0033cc;">打印<u>P</u></div><div style="left:255px;top:41.5px;width:17px;height:14px;"><svg width="17" height="14" viewBox="0 0 17 14"><path d="M4.5 6L7 0.8h6.5L11.5 6z" fill="#fff" stroke="#222" stroke-width="0.9"/><path d="M8 1.8L10.5 4.8M11 1.8L7.8 4.8" stroke="#e02020" stroke-width="0.9"/><path d="M1 9C1 7 2.5 5.8 5 5.8H12.5c2.2 0 3.5 1.2 3.5 3v2c0 1.4-1 2.2-2.7 2.2H3.5C1.8 13 1 12.2 1 10.8z" fill="#fff" stroke="#111" stroke-width="1"/><path d="M12 6.2c2.3 0 3.6 1 3.6 2.8v1.8c0 1.2-0.8 1.8-2 1.8L12.5 9z" fill="#b9b9b9"/><path d="M2 10.8h10.5" stroke="#333" stroke-width="1"/><path d="M8 8.8h1M10 8.8h1" stroke="#e02020" stroke-width="1"/></svg></div><div class="t" style="left:419px;top:40.5px;color:#0033cc;">反审核<u>U</u></div><div class="t" style="left:498px;top:40.5px;color:#0033cc;">新增<u>A</u></div><div class="t" style="left:644px;top:40.5px;color:#0033cc;">返回<u>R</u></div><div class="h1" style="left:22px;top:69px">质量检查</div><div class="red" style="left:223px;top:69px;">已审核</div><div class="t" style="left:298px;top:75.5px;">单据日期</div><div class="in dt" style="left:383px;top:72px;width:154px;height:23px;line-height:21px;"><span>2024-08-18</span><svg class="cal" width="22" height="14" viewBox="0 0 22 14"><rect x="2.5" y="2.5" width="9.5" height="10.5" rx="1.5" fill="#ececec" stroke="#cfcfcf"/><rect x="1" y="1" width="9.5" height="10.5" rx="1.5" fill="#f7f7f7" stroke="#bdbdbd"/><path d="M3 4.5h5.5M3 6.5h5.5M3 8.5h5.5M4.5 3.5v6.5M6.5 3.5v6.5" stroke="#cdcdcd" stroke-width="1" fill="none"/><path d="M14 5h7l-3.5 4z" fill="#b8b8b2"/></svg></div><div class="t" style="left:574px;top:75.5px;">单据编号</div><div class="in" style="left:659px;top:73px;width:154px;height:20px;line-height:17px;"><span style="font-family:'Liberation Serif',serif;font-size:12px">QA-24-08-18-0001</span></div><div class="t" style="left:22px;top:102.5px;">引用单据</div><div class="in" style="left:107px;top:100px;width:154px;height:20px;line-height:17px;"><span style="font-family:'Liberation Serif',serif;font-size:12px">AA-24-08-18-0001</span></div><div style="left:269px;top:102px;width:15px;height:15px;"><svg width="15" height="15" viewBox="0 0 15 15"><path d="M1 3h8v6H1z" fill="#0f8a8a"/><path d="M9 2l4-1v9l-4-1z" fill="#cfcfcf"/><circle cx="6" cy="10" r="3" fill="none" stroke="#222" stroke-width="1.2"/><path d="M8 12l3 2.5" stroke="#222" stroke-width="1.5"/></svg></div><div class="t" style="left:298px;top:102.5px;">产品</div><div class="in" style="left:383px;top:100px;width:154px;height:20px;line-height:17px;"><span style="">小型机<span class="s">-XG-NG</span></span></div><div class="t" style="left:546px;top:103.5px;color:#888;font-size:10px;line-height:14px;">. .</div><div class="t" style="left:574px;top:102.5px;color:#808000;">规格</div><div class="in" style="left:659px;top:100px;width:154px;height:20px;line-height:17px;"></div><div class="t" style="left:850px;top:102.5px;color:#808000;">产品编号</div><div class="in" style="left:935px;top:101px;width:154px;height:18px;line-height:15px;"><span style="font-family:'Liberation Serif',serif;font-size:10.5px;color:#8a8a8a">XXJ</span></div><div class="t" style="left:1126px;top:102.5px;color:#808000;">单位</div><div class="in" style="left:1211px;top:101px;width:154px;height:18px;line-height:15px;"><span style="color:#8a8a8a">个</span></div><div class="t" style="left:22px;top:129.5px;">批次编号</div><div class="in" style="left:107px;top:127px;width:154px;height:20px;line-height:17px;"><span style="">-</span></div><div class="t" style="left:298px;top:129.5px;">生产日期</div><div class="in dt" style="left:383px;top:127px;width:154px;height:21px;line-height:19px;"><span>2024-08-18</span><svg class="cal" width="22" height="14" viewBox="0 0 22 14"><rect x="2.5" y="2.5" width="9.5" height="10.5" rx="1.5" fill="#ececec" stroke="#cfcfcf"/><rect x="1" y="1" width="9.5" height="10.5" rx="1.5" fill="#f7f7f7" stroke="#bdbdbd"/><path d="M3 4.5h5.5M3 6.5h5.5M3 8.5h5.5M4.5 3.5v6.5M6.5 3.5v6.5" stroke="#cdcdcd" stroke-width="1" fill="none"/><path d="M14 5h7l-3.5 4z" fill="#b8b8b2"/></svg></div><div class="t" style="left:574px;top:129.5px;">产品备注</div><div class="in" style="left:659px;top:127px;width:154px;height:20px;line-height:17px;"></div><div class="t" style="left:850px;top:129.5px;">精度等级</div><div class="in" style="left:935px;top:127px;width:154px;height:20px;line-height:17px;"></div><div class="t" style="left:1126px;top:129.5px;">供应商</div><div class="in" style="left:1211px;top:127px;width:154px;height:20px;line-height:17px;"><span style="">三利五金</span></div><div class="t" style="left:1373px;top:130.5px;color:#888;font-size:10px;line-height:14px;">. .</div><div class="t" style="left:22px;top:156.5px;">相关客户</div><div class="in" style="left:107px;top:154px;width:154px;height:20px;line-height:17px;"></div><div class="t" style="left:270px;top:157.5px;color:#888;font-size:10px;line-height:14px;">. .</div><div class="t" style="left:298px;top:156.5px;">送检部门</div><div class="in" style="left:383px;top:154px;width:154px;height:20px;line-height:17px;"></div><div class="t" style="left:574px;top:156.5px;">检查日期</div><div class="in dt" style="left:659px;top:154px;width:154px;height:21px;line-height:19px;"><span></span><svg class="cal" width="22" height="14" viewBox="0 0 22 14"><rect x="2.5" y="2.5" width="9.5" height="10.5" rx="1.5" fill="#ececec" stroke="#cfcfcf"/><rect x="1" y="1" width="9.5" height="10.5" rx="1.5" fill="#f7f7f7" stroke="#bdbdbd"/><path d="M3 4.5h5.5M3 6.5h5.5M3 8.5h5.5M4.5 3.5v6.5M6.5 3.5v6.5" stroke="#cdcdcd" stroke-width="1" fill="none"/><path d="M14 5h7l-3.5 4z" fill="#b8b8b2"/></svg></div><div class="t" style="left:850px;top:156.5px;">抽样总数</div><div class="in" style="left:935px;top:154px;width:154px;height:20px;line-height:17px;"><span style="font-size:11px">120</span></div><div class="t" style="left:1126px;top:156.5px;">不良数</div><div class="in" style="left:1211px;top:154px;width:154px;height:20px;line-height:17px;"><span style="font-size:11px">0</span></div><div class="t" style="left:22px;top:183.5px;">不良率%</div><div class="in" style="left:107px;top:181px;width:154px;height:20px;line-height:17px;"><span style="font-size:11px">0</span></div><div class="t" style="left:298px;top:183.5px;">数据列数</div><div class="in" style="left:383px;top:181px;width:154px;height:20px;line-height:17px;"><span style="font-size:11px">0</span></div><div style="left:7px;top:206px;width:1004px;height:434px;background:#9fc8a0"></div><div style="left:8px;top:207px;width:48px;height:32px;background:#f5e6ef;text-align:center;color:#0a0aa0;line-height:32px;overflow:hidden;white-space:nowrap;">-</div><div style="left:57px;top:207px;width:82px;height:32px;background:#f1f1f1;text-align:center;color:#0a0aa0;line-height:32px;overflow:hidden;white-space:nowrap;">编码</div><div style="left:140px;top:207px;width:127px;height:32px;background:#f1f1f1;text-align:center;color:#0a0aa0;line-height:32px;overflow:hidden;white-space:nowrap;">名称</div><div style="left:268px;top:207px;width:57px;height:32px;background:#f1f1f1;text-align:center;color:#0a0aa0;line-height:32px;overflow:hidden;white-space:nowrap;">性质</div><div style="left:326px;top:207px;width:41px;height:32px;background:#f1f1f1;text-align:center;color:#0a0aa0;line-height:32px;overflow:hidden;white-space:nowrap;">单位</div><div style="left:368px;top:207px;width:43px;height:32px;background:#f1f1f1;text-align:center;color:#0a0aa0;line-height:32px;overflow:hidden;white-space:nowrap;">总数量</div><div style="left:412px;top:207px;width:42px;height:32px;background:#f1f1f1;text-align:center;color:#0a0aa0;line-height:32px;overflow:hidden;white-space:nowrap;">不良数</div><div style="left:455px;top:207px;width:43px;height:32px;background:#f1f1f1;text-align:center;color:#0a0aa0;line-height:32px;overflow:hidden;white-space:nowrap;"><span style="position:relative;top:-8px">不良率</span></div><div style="left:499px;top:207px;width:45px;height:32px;background:#f1f1f1;text-align:center;color:#0a0aa0;line-height:32px;overflow:hidden;white-space:nowrap;">标准</div><div style="left:545px;top:207px;width:55px;height:32px;background:#f1f1f1;text-align:center;color:#0a0aa0;line-height:32px;overflow:hidden;white-space:nowrap;">精度等级</div><div style="left:601px;top:207px;width:46px;height:32px;background:#f1f1f1;text-align:center;color:#0a0aa0;line-height:32px;overflow:hidden;white-space:nowrap;">允许超</div><div style="left:648px;top:207px;width:44px;height:32px;background:#f1f1f1;text-align:center;color:#0a0aa0;line-height:32px;overflow:hidden;white-space:nowrap;">允许差</div><div style="left:693px;top:207px;width:173px;height:32px;background:#f1f1f1;text-align:center;color:#0a0aa0;line-height:32px;overflow:hidden;white-space:nowrap;">备注</div><div style="left:867px;top:207px;width:63px;height:32px;background:#f1f1f1;text-align:center;color:#0a0aa0;line-height:32px;overflow:hidden;white-space:nowrap;">项目说明</div><div style="left:931px;top:207px;width:79px;height:32px;background:#f1f1f1;text-align:center;color:#0a0aa0;line-height:32px;overflow:hidden;white-space:nowrap;">审后备注</div><div style="left:8px;top:240px;width:48px;height:24px;background:#f0f0f0;line-height:24px;white-space:nowrap;overflow:hidden;text-align:center;color:#00007f;font-size:11px;">1</div><div style="left:57px;top:240px;width:82px;height:24px;background:#5564ee;line-height:24px;white-space:nowrap;overflow:hidden;"></div><div style="left:140px;top:240px;width:127px;height:24px;background:#ccffff;line-height:24px;white-space:nowrap;overflow:hidden;"></div><div style="left:268px;top:240px;width:57px;height:24px;background:#ccffff;line-height:24px;white-space:nowrap;overflow:hidden;"></div><div style="left:326px;top:240px;width:41px;height:24px;background:#ccffff;line-height:24px;white-space:nowrap;overflow:hidden;"></div><div style="left:368px;top:240px;width:43px;height:24px;background:#ccffff;line-height:24px;white-space:nowrap;overflow:hidden;"></div><div style="left:412px;top:240px;width:42px;height:24px;background:#ccffff;line-height:24px;white-space:nowrap;overflow:hidden;"></div><div style="left:455px;top:240px;width:43px;height:24px;background:#ccffff;line-height:24px;white-space:nowrap;overflow:hidden;"></div><div style="left:499px;top:240px;width:45px;height:24px;background:#ccffff;line-height:24px;white-space:nowrap;overflow:hidden;"></div><div style="left:545px;top:240px;width:55px;height:24px;background:#ccffff;line-height:24px;white-space:nowrap;overflow:hidden;"></div><div style="left:601px;top:240px;width:46px;height:24px;background:#ccffff;line-height:24px;white-space:nowrap;overflow:hidden;"></div><div style="left:648px;top:240px;width:44px;height:24px;background:#ccffff;line-height:24px;white-space:nowrap;overflow:hidden;"></div><div style="left:693px;top:240px;width:173px;height:24px;background:#ccffff;line-height:24px;white-space:nowrap;overflow:hidden;"></div><div style="left:867px;top:240px;width:63px;height:24px;background:#ccffff;line-height:24px;white-space:nowrap;overflow:hidden;"></div><div style="left:931px;top:240px;width:79px;height:24px;background:#ccffff;line-height:24px;white-space:nowrap;overflow:hidden;"></div><div style="left:8px;top:265px;width:48px;height:24px;background:#f0f0f0;line-height:24px;white-space:nowrap;overflow:hidden;text-align:center;color:#00007f;font-size:11px;">2</div><div style="left:57px;top:265px;width:82px;height:24px;background:#fffffb;line-height:24px;white-space:nowrap;overflow:hidden;"></div><div style="left:140px;top:265px;width:127px;height:24px;background:#fffffb;line-height:24px;white-space:nowrap;overflow:hidden;"></div><div style="left:268px;top:265px;width:57px;height:24px;background:#eef3e9;line-height:24px;white-space:nowrap;overflow:hidden;"></div><div style="left:326px;top:265px;width:41px;height:24px;background:#eef3e9;line-height:24px;white-space:nowrap;overflow:hidden;"></div><div style="left:368px;top:265px;width:43px;height:24px;background:#eef3e9;line-height:24px;white-space:nowrap;overflow:hidden;"></div><div style="left:412px;top:265px;width:42px;height:24px;background:#eef3e9;line-height:24px;white-space:nowrap;overflow:hidden;"></div><div style="left:455px;top:265px;width:43px;height:24px;background:#eef3e9;line-height:24px;white-space:nowrap;overflow:hidden;"></div><div style="left:499px;top:265px;width:45px;height:24px;background:#eef3e9;line-height:24px;white-space:nowrap;overflow:hidden;"></div><div style="left:545px;top:265px;width:55px;height:24px;background:#eef3e9;line-height:24px;white-space:nowrap;overflow:hidden;"></div><div style="left:601px;top:265px;width:46px;height:24px;background:#eef3e9;line-height:24px;white-space:nowrap;overflow:hidden;"></div><div style="left:648px;top:265px;width:44px;height:24px;background:#eef3e9;line-height:24px;white-space:nowrap;overflow:hidden;"></div><div style="left:693px;top:265px;width:173px;height:24px;background:#eef3e9;line-height:24px;white-space:nowrap;overflow:hidden;"></div><div style="left:867px;top:265px;width:63px;height:24px;background:#eef3e9;line-height:24px;white-space:nowrap;overflow:hidden;"></div><div style="left:931px;top:265px;width:79px;height:24px;background:#eef3e9;line-height:24px;white-space:nowrap;overflow:hidden;"></div><div style="left:8px;top:290px;width:48px;height:24px;background:#f0f0f0;line-height:24px;white-space:nowrap;overflow:hidden;text-align:center;color:#00007f;font-size:11px;">3</div><div style="left:57px;top:290px;width:82px;height:24px;background:#f5fdfd;line-height:24px;white-space:nowrap;overflow:hidden;"></div><div style="left:140px;top:290px;width:127px;height:24px;background:#f5fdfd;line-height:24px;white-space:nowrap;overflow:hidden;"></div><div style="left:268px;top:290px;width:57px;height:24px;background:#eef3e9;line-height:24px;white-space:nowrap;overflow:hidden;"></div><div style="left:326px;top:290px;width:41px;height:24px;background:#eef3e9;line-height:24px;white-space:nowrap;overflow:hidden;"></div><div style="left:368px;top:290px;width:43px;height:24px;background:#eef3e9;line-height:24px;white-space:nowrap;overflow:hidden;"></div><div style="left:412px;top:290px;width:42px;height:24px;background:#eef3e9;line-height:24px;white-space:nowrap;overflow:hidden;"></div><div style="left:455px;top:290px;width:43px;height:24px;background:#eef3e9;line-height:24px;white-space:nowrap;overflow:hidden;"></div><div style="left:499px;top:290px;width:45px;height:24px;background:#eef3e9;line-height:24px;white-space:nowrap;overflow:hidden;"></div><div style="left:545px;top:290px;width:55px;height:24px;background:#eef3e9;line-height:24px;white-space:nowrap;overflow:hidden;"></div><div style="left:601px;top:290px;width:46px;height:24px;background:#eef3e9;line-height:24px;white-space:nowrap;overflow:hidden;"></div><div style="left:648px;top:290px;width:44px;height:24px;background:#eef3e9;line-height:24px;white-space:nowrap;overflow:hidden;"></div><div style="left:693px;top:290px;width:173px;height:24px;background:#eef3e9;line-height:24px;white-space:nowrap;overflow:hidden;"></div><div style="left:867px;top:290px;width:63px;height:24px;background:#eef3e9;line-height:24px;white-space:nowrap;overflow:hidden;"></div><div style="left:931px;top:290px;width:79px;height:24px;background:#eef3e9;line-height:24px;white-space:nowrap;overflow:hidden;"></div><div style="left:8px;top:315px;width:48px;height:24px;background:#f0f0f0;line-height:24px;white-space:nowrap;overflow:hidden;text-align:center;color:#00007f;font-size:11px;">4</div><div style="left:57px;top:315px;width:82px;height:24px;background:#fffffb;line-height:24px;white-space:nowrap;overflow:hidden;"></div><div style="left:140px;top:315px;width:127px;height:24px;background:#fffffb;line-height:24px;white-space:nowrap;overflow:hidden;"></div><div style="left:268px;top:315px;width:57px;height:24px;background:#eef3e9;line-height:24px;white-space:nowrap;overflow:hidden;"></div><div style="left:326px;top:315px;width:41px;height:24px;background:#eef3e9;line-height:24px;white-space:nowrap;overflow:hidden;"></div><div style="left:368px;top:315px;width:43px;height:24px;background:#eef3e9;line-height:24px;white-space:nowrap;overflow:hidden;"></div><div style="left:412px;top:315px;width:42px;height:24px;background:#eef3e9;line-height:24px;white-space:nowrap;overflow:hidden;"></div><div style="left:455px;top:315px;width:43px;height:24px;background:#eef3e9;line-height:24px;white-space:nowrap;overflow:hidden;"></div><div style="left:499px;top:315px;width:45px;height:24px;background:#eef3e9;line-height:24px;white-space:nowrap;overflow:hidden;"></div><div style="left:545px;top:315px;width:55px;height:24px;background:#eef3e9;line-height:24px;white-space:nowrap;overflow:hidden;"></div><div style="left:601px;top:315px;width:46px;height:24px;background:#eef3e9;line-height:24px;white-space:nowrap;overflow:hidden;"></div><div style="left:648px;top:315px;width:44px;height:24px;background:#eef3e9;line-height:24px;white-space:nowrap;overflow:hidden;"></div><div style="left:693px;top:315px;width:173px;height:24px;background:#eef3e9;line-height:24px;white-space:nowrap;overflow:hidden;"></div><div style="left:867px;top:315px;width:63px;height:24px;background:#eef3e9;line-height:24px;white-space:nowrap;overflow:hidden;"></div><div style="left:931px;top:315px;width:79px;height:24px;background:#eef3e9;line-height:24px;white-space:nowrap;overflow:hidden;"></div><div style="left:8px;top:340px;width:48px;height:24px;background:#f0f0f0;line-height:24px;white-space:nowrap;overflow:hidden;text-align:center;color:#00007f;font-size:11px;">5</div><div style="left:57px;top:340px;width:82px;height:24px;background:#f5fdfd;line-height:24px;white-space:nowrap;overflow:hidden;"></div><div style="left:140px;top:340px;width:127px;height:24px;background:#f5fdfd;line-height:24px;white-space:nowrap;overflow:hidden;"></div><div style="left:268px;top:340px;width:57px;height:24px;background:#eef3e9;line-height:24px;white-space:nowrap;overflow:hidden;"></div><div style="left:326px;top:340px;width:41px;height:24px;background:#eef3e9;line-height:24px;white-space:nowrap;overflow:hidden;"></div><div style="left:368px;top:340px;width:43px;height:24px;background:#eef3e9;line-height:24px;white-space:nowrap;overflow:hidden;"></div><div style="left:412px;top:340px;width:42px;height:24px;background:#eef3e9;line-height:24px;white-space:nowrap;overflow:hidden;"></div><div style="left:455px;top:340px;width:43px;height:24px;background:#eef3e9;line-height:24px;white-space:nowrap;overflow:hidden;"></div><div style="left:499px;top:340px;width:45px;height:24px;background:#eef3e9;line-height:24px;white-space:nowrap;overflow:hidden;"></div><div style="left:545px;top:340px;width:55px;height:24px;background:#eef3e9;line-height:24px;white-space:nowrap;overflow:hidden;"></div><div style="left:601px;top:340px;width:46px;height:24px;background:#eef3e9;line-height:24px;white-space:nowrap;overflow:hidden;"></div><div style="left:648px;top:340px;width:44px;height:24px;background:#eef3e9;line-height:24px;white-space:nowrap;overflow:hidden;"></div><div style="left:693px;top:340px;width:173px;height:24px;background:#eef3e9;line-height:24px;white-space:nowrap;overflow:hidden;"></div><div style="left:867px;top:340px;width:63px;height:24px;background:#eef3e9;line-height:24px;white-space:nowrap;overflow:hidden;"></div><div style="left:931px;top:340px;width:79px;height:24px;background:#eef3e9;line-height:24px;white-space:nowrap;overflow:hidden;"></div><div style="left:8px;top:365px;width:48px;height:24px;background:#f0f0f0;line-height:24px;white-space:nowrap;overflow:hidden;text-align:center;color:#00007f;font-size:11px;">6</div><div style="left:57px;top:365px;width:82px;height:24px;background:#fffffb;line-height:24px;white-space:nowrap;overflow:hidden;"></div><div style="left:140px;top:365px;width:127px;height:24px;background:#fffffb;line-height:24px;white-space:nowrap;overflow:hidden;"></div><div style="left:268px;top:365px;width:57px;height:24px;background:#eef3e9;line-height:24px;white-space:nowrap;overflow:hidden;"></div><div style="left:326px;top:365px;width:41px;height:24px;background:#eef3e9;line-height:24px;white-space:nowrap;overflow:hidden;"></div><div style="left:368px;top:365px;width:43px;height:24px;background:#eef3e9;line-height:24px;white-space:nowrap;overflow:hidden;"></div><div style="left:412px;top:365px;width:42px;height:24px;background:#eef3e9;line-height:24px;white-space:nowrap;overflow:hidden;"></div><div style="left:455px;top:365px;width:43px;height:24px;background:#eef3e9;line-height:24px;white-space:nowrap;overflow:hidden;"></div><div style="left:499px;top:365px;width:45px;height:24px;background:#eef3e9;line-height:24px;white-space:nowrap;overflow:hidden;"></div><div style="left:545px;top:365px;width:55px;height:24px;background:#eef3e9;line-height:24px;white-space:nowrap;overflow:hidden;"></div><div style="left:601px;top:365px;width:46px;height:24px;background:#eef3e9;line-height:24px;white-space:nowrap;overflow:hidden;"></div><div style="left:648px;top:365px;width:44px;height:24px;background:#eef3e9;line-height:24px;white-space:nowrap;overflow:hidden;"></div><div style="left:693px;top:365px;width:173px;height:24px;background:#eef3e9;line-height:24px;white-space:nowrap;overflow:hidden;"></div><div style="left:867px;top:365px;width:63px;height:24px;background:#eef3e9;line-height:24px;white-space:nowrap;overflow:hidden;"></div><div style="left:931px;top:365px;width:79px;height:24px;background:#eef3e9;line-height:24px;white-space:nowrap;overflow:hidden;"></div><div style="left:8px;top:390px;width:48px;height:24px;background:#f0f0f0;line-height:24px;white-space:nowrap;overflow:hidden;text-align:center;color:#00007f;font-size:11px;">7</div><div style="left:57px;top:390px;width:82px;height:24px;background:#f5fdfd;line-height:24px;white-space:nowrap;overflow:hidden;"></div><div style="left:140px;top:390px;width:127px;height:24px;background:#f5fdfd;line-height:24px;white-space:nowrap;overflow:hidden;"></div><div style="left:268px;top:390px;width:57px;height:24px;background:#eef3e9;line-height:24px;white-space:nowrap;overflow:hidden;"></div><div style="left:326px;top:390px;width:41px;height:24px;background:#eef3e9;line-height:24px;white-space:nowrap;overflow:hidden;"></div><div style="left:368px;top:390px;width:43px;height:24px;background:#eef3e9;line-height:24px;white-space:nowrap;overflow:hidden;"></div><div style="left:412px;top:390px;width:42px;height:24px;background:#eef3e9;line-height:24px;white-space:nowrap;overflow:hidden;"></div><div style="left:455px;top:390px;width:43px;height:24px;background:#eef3e9;line-height:24px;white-space:nowrap;overflow:hidden;"></div><div style="left:499px;top:390px;width:45px;height:24px;background:#eef3e9;line-height:24px;white-space:nowrap;overflow:hidden;"></div><div style="left:545px;top:390px;width:55px;height:24px;background:#eef3e9;line-height:24px;white-space:nowrap;overflow:hidden;"></div><div style="left:601px;top:390px;width:46px;height:24px;background:#eef3e9;line-height:24px;white-space:nowrap;overflow:hidden;"></div><div style="left:648px;top:390px;width:44px;height:24px;background:#eef3e9;line-height:24px;white-space:nowrap;overflow:hidden;"></div><div style="left:693px;top:390px;width:173px;height:24px;background:#eef3e9;line-height:24px;white-space:nowrap;overflow:hidden;"></div><div style="left:867px;top:390px;width:63px;height:24px;background:#eef3e9;line-height:24px;white-space:nowrap;overflow:hidden;"></div><div style="left:931px;top:390px;width:79px;height:24px;background:#eef3e9;line-height:24px;white-space:nowrap;overflow:hidden;"></div><div style="left:8px;top:415px;width:48px;height:24px;background:#f0f0f0;line-height:24px;white-space:nowrap;overflow:hidden;text-align:center;color:#00007f;font-size:11px;">8</div><div style="left:57px;top:415px;width:82px;height:24px;background:#fffffb;line-height:24px;white-space:nowrap;overflow:hidden;"></div><div style="left:140px;top:415px;width:127px;height:24px;background:#fffffb;line-height:24px;white-space:nowrap;overflow:hidden;"></div><div style="left:268px;top:415px;width:57px;height:24px;background:#eef3e9;line-height:24px;white-space:nowrap;overflow:hidden;"></div><div style="left:326px;top:415px;width:41px;height:24px;background:#eef3e9;line-height:24px;white-space:nowrap;overflow:hidden;"></div><div style="left:368px;top:415px;width:43px;height:24px;background:#eef3e9;line-height:24px;white-space:nowrap;overflow:hidden;"></div><div style="left:412px;top:415px;width:42px;height:24px;background:#eef3e9;line-height:24px;white-space:nowrap;overflow:hidden;"></div><div style="left:455px;top:415px;width:43px;height:24px;background:#eef3e9;line-height:24px;white-space:nowrap;overflow:hidden;"></div><div style="left:499px;top:415px;width:45px;height:24px;background:#eef3e9;line-height:24px;white-space:nowrap;overflow:hidden;"></div><div style="left:545px;top:415px;width:55px;height:24px;background:#eef3e9;line-height:24px;white-space:nowrap;overflow:hidden;"></div><div style="left:601px;top:415px;width:46px;height:24px;background:#eef3e9;line-height:24px;white-space:nowrap;overflow:hidden;"></div><div style="left:648px;top:415px;width:44px;height:24px;background:#eef3e9;line-height:24px;white-space:nowrap;overflow:hidden;"></div><div style="left:693px;top:415px;width:173px;height:24px;background:#eef3e9;line-height:24px;white-space:nowrap;overflow:hidden;"></div><div style="left:867px;top:415px;width:63px;height:24px;background:#eef3e9;line-height:24px;white-space:nowrap;overflow:hidden;"></div><div style="left:931px;top:415px;width:79px;height:24px;background:#eef3e9;line-height:24px;white-space:nowrap;overflow:hidden;"></div><div style="left:8px;top:440px;width:48px;height:24px;background:#f0f0f0;line-height:24px;white-space:nowrap;overflow:hidden;text-align:center;color:#00007f;font-size:11px;">9</div><div style="left:57px;top:440px;width:82px;height:24px;background:#f5fdfd;line-height:24px;white-space:nowrap;overflow:hidden;"></div><div style="left:140px;top:440px;width:127px;height:24px;background:#f5fdfd;line-height:24px;white-space:nowrap;overflow:hidden;"></div><div style="left:268px;top:440px;width:57px;height:24px;background:#eef3e9;line-height:24px;white-space:nowrap;overflow:hidden;"></div><div style="left:326px;top:440px;width:41px;height:24px;background:#eef3e9;line-height:24px;white-space:nowrap;overflow:hidden;"></div><div style="left:368px;top:440px;width:43px;height:24px;background:#eef3e9;line-height:24px;white-space:nowrap;overflow:hidden;"></div><div style="left:412px;top:440px;width:42px;height:24px;background:#eef3e9;line-height:24px;white-space:nowrap;overflow:hidden;"></div><div style="left:455px;top:440px;width:43px;height:24px;background:#eef3e9;line-height:24px;white-space:nowrap;overflow:hidden;"></div><div style="left:499px;top:440px;width:45px;height:24px;background:#eef3e9;line-height:24px;white-space:nowrap;overflow:hidden;"></div><div style="left:545px;top:440px;width:55px;height:24px;background:#eef3e9;line-height:24px;white-space:nowrap;overflow:hidden;"></div><div style="left:601px;top:440px;width:46px;height:24px;background:#eef3e9;line-height:24px;white-space:nowrap;overflow:hidden;"></div><div style="left:648px;top:440px;width:44px;height:24px;background:#eef3e9;line-height:24px;white-space:nowrap;overflow:hidden;"></div><div style="left:693px;top:440px;width:173px;height:24px;background:#eef3e9;line-height:24px;white-space:nowrap;overflow:hidden;"></div><div style="left:867px;top:440px;width:63px;height:24px;background:#eef3e9;line-height:24px;white-space:nowrap;overflow:hidden;"></div><div style="left:931px;top:440px;width:79px;height:24px;background:#eef3e9;line-height:24px;white-space:nowrap;overflow:hidden;"></div><div style="left:8px;top:465px;width:48px;height:24px;background:#f0f0f0;line-height:24px;white-space:nowrap;overflow:hidden;text-align:center;color:#00007f;font-size:11px;">10</div><div style="left:57px;top:465px;width:82px;height:24px;background:#fffffb;line-height:24px;white-space:nowrap;overflow:hidden;"></div><div style="left:140px;top:465px;width:127px;height:24px;background:#fffffb;line-height:24px;white-space:nowrap;overflow:hidden;"></div><div style="left:268px;top:465px;width:57px;height:24px;background:#eef3e9;line-height:24px;white-space:nowrap;overflow:hidden;"></div><div style="left:326px;top:465px;width:41px;height:24px;background:#eef3e9;line-height:24px;white-space:nowrap;overflow:hidden;"></div><div style="left:368px;top:465px;width:43px;height:24px;background:#eef3e9;line-height:24px;white-space:nowrap;overflow:hidden;"></div><div style="left:412px;top:465px;width:42px;height:24px;background:#eef3e9;line-height:24px;white-space:nowrap;overflow:hidden;"></div><div style="left:455px;top:465px;width:43px;height:24px;background:#eef3e9;line-height:24px;white-space:nowrap;overflow:hidden;"></div><div style="left:499px;top:465px;width:45px;height:24px;background:#eef3e9;line-height:24px;white-space:nowrap;overflow:hidden;"></div><div style="left:545px;top:465px;width:55px;height:24px;background:#eef3e9;line-height:24px;white-space:nowrap;overflow:hidden;"></div><div style="left:601px;top:465px;width:46px;height:24px;background:#eef3e9;line-height:24px;white-space:nowrap;overflow:hidden;"></div><div style="left:648px;top:465px;width:44px;height:24px;background:#eef3e9;line-height:24px;white-space:nowrap;overflow:hidden;"></div><div style="left:693px;top:465px;width:173px;height:24px;background:#eef3e9;line-height:24px;white-space:nowrap;overflow:hidden;"></div><div style="left:867px;top:465px;width:63px;height:24px;background:#eef3e9;line-height:24px;white-space:nowrap;overflow:hidden;"></div><div style="left:931px;top:465px;width:79px;height:24px;background:#eef3e9;line-height:24px;white-space:nowrap;overflow:hidden;"></div><div style="left:8px;top:490px;width:48px;height:24px;background:#f0f0f0;line-height:24px;white-space:nowrap;overflow:hidden;text-align:center;color:#00007f;font-size:11px;">11</div><div style="left:57px;top:490px;width:82px;height:24px;background:#f5fdfd;line-height:24px;white-space:nowrap;overflow:hidden;"></div><div style="left:140px;top:490px;width:127px;height:24px;background:#f5fdfd;line-height:24px;white-space:nowrap;overflow:hidden;"></div><div style="left:268px;top:490px;width:57px;height:24px;background:#eef3e9;line-height:24px;white-space:nowrap;overflow:hidden;"></div><div style="left:326px;top:490px;width:41px;height:24px;background:#eef3e9;line-height:24px;white-space:nowrap;overflow:hidden;"></div><div style="left:368px;top:490px;width:43px;height:24px;background:#eef3e9;line-height:24px;white-space:nowrap;overflow:hidden;"></div><div style="left:412px;top:490px;width:42px;height:24px;background:#eef3e9;line-height:24px;white-space:nowrap;overflow:hidden;"></div><div style="left:455px;top:490px;width:43px;height:24px;background:#eef3e9;line-height:24px;white-space:nowrap;overflow:hidden;"></div><div style="left:499px;top:490px;width:45px;height:24px;background:#eef3e9;line-height:24px;white-space:nowrap;overflow:hidden;"></div><div style="left:545px;top:490px;width:55px;height:24px;background:#eef3e9;line-height:24px;white-space:nowrap;overflow:hidden;"></div><div style="left:601px;top:490px;width:46px;height:24px;background:#eef3e9;line-height:24px;white-space:nowrap;overflow:hidden;"></div><div style="left:648px;top:490px;width:44px;height:24px;background:#eef3e9;line-height:24px;white-space:nowrap;overflow:hidden;"></div><div style="left:693px;top:490px;width:173px;height:24px;background:#eef3e9;line-height:24px;white-space:nowrap;overflow:hidden;"></div><div style="left:867px;top:490px;width:63px;height:24px;background:#eef3e9;line-height:24px;white-space:nowrap;overflow:hidden;"></div><div style="left:931px;top:490px;width:79px;height:24px;background:#eef3e9;line-height:24px;white-space:nowrap;overflow:hidden;"></div><div style="left:8px;top:515px;width:48px;height:24px;background:#f0f0f0;line-height:24px;white-space:nowrap;overflow:hidden;text-align:center;color:#00007f;font-size:11px;">12</div><div style="left:57px;top:515px;width:82px;height:24px;background:#fffffb;line-height:24px;white-space:nowrap;overflow:hidden;"></div><div style="left:140px;top:515px;width:127px;height:24px;background:#fffffb;line-height:24px;white-space:nowrap;overflow:hidden;"></div><div style="left:268px;top:515px;width:57px;height:24px;background:#eef3e9;line-height:24px;white-space:nowrap;overflow:hidden;"></div><div style="left:326px;top:515px;width:41px;height:24px;background:#eef3e9;line-height:24px;white-space:nowrap;overflow:hidden;"></div><div style="left:368px;top:515px;width:43px;height:24px;background:#eef3e9;line-height:24px;white-space:nowrap;overflow:hidden;"></div><div style="left:412px;top:515px;width:42px;height:24px;background:#eef3e9;line-height:24px;white-space:nowrap;overflow:hidden;"></div><div style="left:455px;top:515px;width:43px;height:24px;background:#eef3e9;line-height:24px;white-space:nowrap;overflow:hidden;"></div><div style="left:499px;top:515px;width:45px;height:24px;background:#eef3e9;line-height:24px;white-space:nowrap;overflow:hidden;"></div><div style="left:545px;top:515px;width:55px;height:24px;background:#eef3e9;line-height:24px;white-space:nowrap;overflow:hidden;"></div><div style="left:601px;top:515px;width:46px;height:24px;background:#eef3e9;line-height:24px;white-space:nowrap;overflow:hidden;"></div><div style="left:648px;top:515px;width:44px;height:24px;background:#eef3e9;line-height:24px;white-space:nowrap;overflow:hidden;"></div><div style="left:693px;top:515px;width:173px;height:24px;background:#eef3e9;line-height:24px;white-space:nowrap;overflow:hidden;"></div><div style="left:867px;top:515px;width:63px;height:24px;background:#eef3e9;line-height:24px;white-space:nowrap;overflow:hidden;"></div><div style="left:931px;top:515px;width:79px;height:24px;background:#eef3e9;line-height:24px;white-space:nowrap;overflow:hidden;"></div><div style="left:8px;top:540px;width:48px;height:24px;background:#f0f0f0;line-height:24px;white-space:nowrap;overflow:hidden;text-align:center;color:#00007f;font-size:11px;">13</div><div style="left:57px;top:540px;width:82px;height:24px;background:#f5fdfd;line-height:24px;white-space:nowrap;overflow:hidden;"></div><div style="left:140px;top:540px;width:127px;height:24px;background:#f5fdfd;line-height:24px;white-space:nowrap;overflow:hidden;"></div><div style="left:268px;top:540px;width:57px;height:24px;background:#eef3e9;line-height:24px;white-space:nowrap;overflow:hidden;"></div><div style="left:326px;top:540px;width:41px;height:24px;background:#eef3e9;line-height:24px;white-space:nowrap;overflow:hidden;"></div><div style="left:368px;top:540px;width:43px;height:24px;background:#eef3e9;line-height:24px;white-space:nowrap;overflow:hidden;"></div><div style="left:412px;top:540px;width:42px;height:24px;background:#eef3e9;line-height:24px;white-space:nowrap;overflow:hidden;"></div><div style="left:455px;top:540px;width:43px;height:24px;background:#eef3e9;line-height:24px;white-space:nowrap;overflow:hidden;"></div><div style="left:499px;top:540px;width:45px;height:24px;background:#eef3e9;line-height:24px;white-space:nowrap;overflow:hidden;"></div><div style="left:545px;top:540px;width:55px;height:24px;background:#eef3e9;line-height:24px;white-space:nowrap;overflow:hidden;"></div><div style="left:601px;top:540px;width:46px;height:24px;background:#eef3e9;line-height:24px;white-space:nowrap;overflow:hidden;"></div><div style="left:648px;top:540px;width:44px;height:24px;background:#eef3e9;line-height:24px;white-space:nowrap;overflow:hidden;"></div><div style="left:693px;top:540px;width:173px;height:24px;background:#eef3e9;line-height:24px;white-space:nowrap;overflow:hidden;"></div><div style="left:867px;top:540px;width:63px;height:24px;background:#eef3e9;line-height:24px;white-space:nowrap;overflow:hidden;"></div><div style="left:931px;top:540px;width:79px;height:24px;background:#eef3e9;line-height:24px;white-space:nowrap;overflow:hidden;"></div><div style="left:8px;top:565px;width:48px;height:24px;background:#f0f0f0;line-height:24px;white-space:nowrap;overflow:hidden;text-align:center;color:#00007f;font-size:11px;">14</div><div style="left:57px;top:565px;width:82px;height:24px;background:#fffffb;line-height:24px;white-space:nowrap;overflow:hidden;"></div><div style="left:140px;top:565px;width:127px;height:24px;background:#fffffb;line-height:24px;white-space:nowrap;overflow:hidden;"></div><div style="left:268px;top:565px;width:57px;height:24px;background:#eef3e9;line-height:24px;white-space:nowrap;overflow:hidden;"></div><div style="left:326px;top:565px;width:41px;height:24px;background:#eef3e9;line-height:24px;white-space:nowrap;overflow:hidden;"></div><div style="left:368px;top:565px;width:43px;height:24px;background:#eef3e9;line-height:24px;white-space:nowrap;overflow:hidden;"></div><div style="left:412px;top:565px;width:42px;height:24px;background:#eef3e9;line-height:24px;white-space:nowrap;overflow:hidden;"></div><div style="left:455px;top:565px;width:43px;height:24px;background:#eef3e9;line-height:24px;white-space:nowrap;overflow:hidden;"></div><div style="left:499px;top:565px;width:45px;height:24px;background:#eef3e9;line-height:24px;white-space:nowrap;overflow:hidden;"></div><div style="left:545px;top:565px;width:55px;height:24px;background:#eef3e9;line-height:24px;white-space:nowrap;overflow:hidden;"></div><div style="left:601px;top:565px;width:46px;height:24px;background:#eef3e9;line-height:24px;white-space:nowrap;overflow:hidden;"></div><div style="left:648px;top:565px;width:44px;height:24px;background:#eef3e9;line-height:24px;white-space:nowrap;overflow:hidden;"></div><div style="left:693px;top:565px;width:173px;height:24px;background:#eef3e9;line-height:24px;white-space:nowrap;overflow:hidden;"></div><div style="left:867px;top:565px;width:63px;height:24px;background:#eef3e9;line-height:24px;white-space:nowrap;overflow:hidden;"></div><div style="left:931px;top:565px;width:79px;height:24px;background:#eef3e9;line-height:24px;white-space:nowrap;overflow:hidden;"></div><div style="left:8px;top:590px;width:48px;height:24px;background:#f0f0f0;line-height:24px;white-space:nowrap;overflow:hidden;text-align:center;color:#00007f;font-size:11px;">15</div><div style="left:57px;top:590px;width:82px;height:24px;background:#f5fdfd;line-height:24px;white-space:nowrap;overflow:hidden;"></div><div style="left:140px;top:590px;width:127px;height:24px;background:#f5fdfd;line-height:24px;white-space:nowrap;overflow:hidden;"></div><div style="left:268px;top:590px;width:57px;height:24px;background:#eef3e9;line-height:24px;white-space:nowrap;overflow:hidden;"></div><div style="left:326px;top:590px;width:41px;height:24px;background:#eef3e9;line-height:24px;white-space:nowrap;overflow:hidden;"></div><div style="left:368px;top:590px;width:43px;height:24px;background:#eef3e9;line-height:24px;white-space:nowrap;overflow:hidden;"></div><div style="left:412px;top:590px;width:42px;height:24px;background:#eef3e9;line-height:24px;white-space:nowrap;overflow:hidden;"></div><div style="left:455px;top:590px;width:43px;height:24px;background:#eef3e9;line-height:24px;white-space:nowrap;overflow:hidden;"></div><div style="left:499px;top:590px;width:45px;height:24px;background:#eef3e9;line-height:24px;white-space:nowrap;overflow:hidden;"></div><div style="left:545px;top:590px;width:55px;height:24px;background:#eef3e9;line-height:24px;white-space:nowrap;overflow:hidden;"></div><div style="left:601px;top:590px;width:46px;height:24px;background:#eef3e9;line-height:24px;white-space:nowrap;overflow:hidden;"></div><div style="left:648px;top:590px;width:44px;height:24px;background:#eef3e9;line-height:24px;white-space:nowrap;overflow:hidden;"></div><div style="left:693px;top:590px;width:173px;height:24px;background:#eef3e9;line-height:24px;white-space:nowrap;overflow:hidden;"></div><div style="left:867px;top:590px;width:63px;height:24px;background:#eef3e9;line-height:24px;white-space:nowrap;overflow:hidden;"></div><div style="left:931px;top:590px;width:79px;height:24px;background:#eef3e9;line-height:24px;white-space:nowrap;overflow:hidden;"></div><div style="left:8px;top:615px;width:48px;height:24px;background:#f0f0f0;line-height:24px;white-space:nowrap;overflow:hidden;text-align:center;color:#00007f;font-size:11px;">16</div><div style="left:57px;top:615px;width:82px;height:24px;background:#fffffb;line-height:24px;white-space:nowrap;overflow:hidden;"></div><div style="left:140px;top:615px;width:127px;height:24px;background:#fffffb;line-height:24px;white-space:nowrap;overflow:hidden;"></div><div style="left:268px;top:615px;width:57px;height:24px;background:#eef3e9;line-height:24px;white-space:nowrap;overflow:hidden;"></div><div style="left:326px;top:615px;width:41px;height:24px;background:#eef3e9;line-height:24px;white-space:nowrap;overflow:hidden;"></div><div style="left:368px;top:615px;width:43px;height:24px;background:#eef3e9;line-height:24px;white-space:nowrap;overflow:hidden;"></div><div style="left:412px;top:615px;width:42px;height:24px;background:#eef3e9;line-height:24px;white-space:nowrap;overflow:hidden;"></div><div style="left:455px;top:615px;width:43px;height:24px;background:#eef3e9;line-height:24px;white-space:nowrap;overflow:hidden;"></div><div style="left:499px;top:615px;width:45px;height:24px;background:#eef3e9;line-height:24px;white-space:nowrap;overflow:hidden;"></div><div style="left:545px;top:615px;width:55px;height:24px;background:#eef3e9;line-height:24px;white-space:nowrap;overflow:hidden;"></div><div style="left:601px;top:615px;width:46px;height:24px;background:#eef3e9;line-height:24px;white-space:nowrap;overflow:hidden;"></div><div style="left:648px;top:615px;width:44px;height:24px;background:#eef3e9;line-height:24px;white-space:nowrap;overflow:hidden;"></div><div style="left:693px;top:615px;width:173px;height:24px;background:#eef3e9;line-height:24px;white-space:nowrap;overflow:hidden;"></div><div style="left:867px;top:615px;width:63px;height:24px;background:#eef3e9;line-height:24px;white-space:nowrap;overflow:hidden;"></div><div style="left:931px;top:615px;width:79px;height:24px;background:#eef3e9;line-height:24px;white-space:nowrap;overflow:hidden;"></div><div style="left:7px;top:639px;width:1004px;height:4px;background:#9fc8a0"></div><div style="left:8px;top:640px;width:48px;height:3px;background:#f0f0f0"></div><div style="left:57px;top:640px;width:82px;height:3px;background:#f5fdfd"></div><div style="left:140px;top:640px;width:127px;height:3px;background:#f5fdfd"></div><div style="left:268px;top:640px;width:57px;height:3px;background:#eef3e9"></div><div style="left:326px;top:640px;width:41px;height:3px;background:#eef3e9"></div><div style="left:368px;top:640px;width:43px;height:3px;background:#eef3e9"></div><div style="left:412px;top:640px;width:42px;height:3px;background:#eef3e9"></div><div style="left:455px;top:640px;width:43px;height:3px;background:#eef3e9"></div><div style="left:499px;top:640px;width:45px;height:3px;background:#eef3e9"></div><div style="left:545px;top:640px;width:55px;height:3px;background:#eef3e9"></div><div style="left:601px;top:640px;width:46px;height:3px;background:#eef3e9"></div><div style="left:648px;top:640px;width:44px;height:3px;background:#eef3e9"></div><div style="left:693px;top:640px;width:173px;height:3px;background:#eef3e9"></div><div style="left:867px;top:640px;width:63px;height:3px;background:#eef3e9"></div><div style="left:931px;top:640px;width:79px;height:3px;background:#eef3e9"></div><div style="left:7px;top:643px;width:1004px;height:25px;background:#9fc8a0"></div><div style="left:8px;top:644px;width:48px;height:23px;background:#f5e6ef;color:#0000ee;padding-left:3px;line-height:24px;white-space:nowrap"></div><div style="left:57px;top:644px;width:82px;height:23px;background:#fffffb;color:#0000ee;padding-left:3px;line-height:24px;white-space:nowrap">合计&nbsp;&nbsp;0</div><div style="left:140px;top:644px;width:127px;height:23px;background:#fffffb;color:#0000ee;padding-left:3px;line-height:24px;white-space:nowrap"></div><div style="left:268px;top:644px;width:57px;height:23px;background:#eef3e9;color:#0000ee;padding-left:3px;line-height:24px;white-space:nowrap"></div><div style="left:326px;top:644px;width:41px;height:23px;background:#eef3e9;color:#0000ee;padding-left:3px;line-height:24px;white-space:nowrap"></div><div style="left:368px;top:644px;width:43px;height:23px;background:#eef3e9;color:#0000ee;padding-left:3px;line-height:24px;white-space:nowrap"></div><div style="left:412px;top:644px;width:42px;height:23px;background:#eef3e9;color:#0000ee;padding-left:3px;line-height:24px;white-space:nowrap"></div><div style="left:455px;top:644px;width:43px;height:23px;background:#eef3e9;color:#0000ee;padding-left:3px;line-height:24px;white-space:nowrap"></div><div style="left:499px;top:644px;width:45px;height:23px;background:#eef3e9;color:#0000ee;padding-left:3px;line-height:24px;white-space:nowrap"></div><div style="left:545px;top:644px;width:55px;height:23px;background:#eef3e9;color:#0000ee;padding-left:3px;line-height:24px;white-space:nowrap"></div><div style="left:601px;top:644px;width:46px;height:23px;background:#eef3e9;color:#0000ee;padding-left:3px;line-height:24px;white-space:nowrap"></div><div style="left:648px;top:644px;width:44px;height:23px;background:#eef3e9;color:#0000ee;padding-left:3px;line-height:24px;white-space:nowrap"></div><div style="left:693px;top:644px;width:173px;height:23px;background:#eef3e9;color:#0000ee;padding-left:3px;line-height:24px;white-space:nowrap"></div><div style="left:867px;top:644px;width:63px;height:23px;background:#eef3e9;color:#0000ee;padding-left:3px;line-height:24px;white-space:nowrap"></div><div style="left:931px;top:644px;width:79px;height:23px;background:#eef3e9;color:#0000ee;padding-left:3px;line-height:24px;white-space:nowrap"></div><div style="left:1392.5px;top:207px;width:16.5px;height:436px;background:#f0f0f0"></div><svg style="position:absolute;left:1396px;top:211.5px" width="9" height="7" viewBox="0 0 9 7"><path d="M1 5.5L4.5 2L8 5.5" fill="none" stroke="#505050" stroke-width="1.9"/></svg><div style="left:1394px;top:223.5px;width:14px;height:16px;background:#cdcdcd"></div><svg style="position:absolute;left:1396px;top:631.5px" width="9" height="7" viewBox="0 0 9 7"><path d="M1 1.5L4.5 5L8 1.5" fill="none" stroke="#505050" stroke-width="1.9"/></svg><div class="t" style="left:22px;top:698.5px;">业务部</div><div class="in" style="left:107px;top:696px;width:154px;height:20px;line-height:17px;"><span style="">销售部</span></div><div class="t" style="left:298px;top:698.5px;">业务员</div><div class="t" style="left:22px;top:725.5px;">备注</div><div class="in" style="left:107px;top:722.5px;width:1258px;height:21px;line-height:18px;"></div><div style="left:1347px;top:724.5px;width:16px;height:17px;background:#ececec"><svg width="16" height="17" viewBox="0 0 16 17"><path d="M5 8L8 5L11 8M5 11.5L8 14.5L11 11.5" fill="none" stroke="#bdbdbd" stroke-width="1.3"/></svg></div></div>
<div style="left:1716px;top:351px;width:145.5px;height:23.8px;background:#f6f9fc;border:1px solid #c3d2e3;box-shadow:1px 1px 1px rgba(120,140,170,.35)"></div>
<svg style="position:absolute;left:1690px;top:340px" width="180" height="44" viewBox="1690 340 180 44"><g transform="rotate(-9 1711 361)"><rect x="1698.5" y="349" width="25.5" height="24.5" rx="4" fill="#35b326"/><rect x="1698.5" y="349" width="25.5" height="12" rx="4" fill="#49c636" opacity=".6"/><path d="M1719.5 356.3C1716 354 1706 354.5 1704.5 358.2C1703 362.5 1719.3 360.3 1718.5 365C1717.8 369 1707 369 1702.8 366.2" fill="none" stroke="#fff" stroke-width="3.5" stroke-linecap="round"/></g><path d="M1731.3 369.3L1737.3 356.6H1739.3L1745.4 369.3H1743.2L1741.7 366H1734.9L1733.4 369.3ZM1735.7 364.3H1740.9L1738.3 358.5Z" fill="#3b3f55"/><path d="M1762.8 356.5A6.7 6.7 0 1 1 1754.3 365.8A8.3 8.3 0 0 0 1762.8 356.5Z" fill="#3b3f55"/><circle cx="1778.7" cy="359.6" r="1.6" fill="#3b3f55"/><path d="M1783.3 362.2a1.7 1.7 0 1 1 2.2 1.8c-0.2 1.5-1 2.6-2.2 3.3l-0.6-0.9c0.8-0.6 1.2-1.3 1.3-2.1a1.7 1.7 0 0 1-0.7-2.1z" fill="#3b3f55"/><rect x="1796.3" y="357.3" width="15.8" height="11.2" rx="1.6" fill="none" stroke="#3b3f55" stroke-width="1.5"/><path d="M1798.8 360.3h1.4M1801.6 360.3h1.4M1804.4 360.3h1.4M1807.2 360.3h1.4M1798.8 362.9h1.4M1801.6 362.9h1.4M1804.4 362.9h1.4M1807.2 362.9h1.4M1800.2 365.7h8.2" stroke="#3b3f55" stroke-width="1.4"/><circle cx="1827.3" cy="359.3" r="3.2" fill="#3b3f55"/><path d="M1821.3 367.2c0-3.6 3-4.4 6-4.4s6 0.8 6 4.4l-2.3 0.3l-0.5 1.9h-6.4l-0.5-1.9z" fill="#3b3f55"/><circle cx="1844.3" cy="360.3" r="3.1" fill="#3b3f55"/><circle cx="1851" cy="360.3" r="3.1" fill="#3b3f55"/><circle cx="1844.3" cy="367" r="3.1" fill="#3b3f55"/><circle cx="1851" cy="367" r="3.1" fill="#3b3f55"/><rect x="1844.3" y="360.3" width="6.7" height="6.7" fill="#3b3f55"/><path d="M1847.65 358.5v10.3M1842.5 363.65h10.3" stroke="#f6f9fc" stroke-width="1.2"/></svg>
<div style="left:0px;top:1007px;width:1920px;height:31px;background:#f0f0f0;border-top:1px solid #fdfdfd"></div>
<div style="left:1918.5px;top:44px;width:1.5px;height:962px;background:#f4f4f4"></div>
<div class="t" style="left:5px;top:1011.5px;color:#0000ff;">导航窗口</div>
<div class="t" style="left:68px;top:1011.5px;color:#0000ff;">采购订单<span class="s">/AA</span></div>
<div class="t" style="left:148px;top:1011.5px;color:#ee1cc2;">质量检查<span class="s">/QA</span></div>
<div class="t" style="left:228px;top:1011.5px;color:#0000ff;">采购收货<span class="s">/AB</span></div>
<div style="left:60px;top:1011px;width:1px;height:27px;background:#9c9c9c"></div>
<div style="left:140px;top:1011px;width:1px;height:27px;background:#9c9c9c"></div>
<div style="left:220px;top:1011px;width:1px;height:27px;background:#9c9c9c"></div>
<div style="left:300px;top:1011px;width:1px;height:27px;background:#9c9c9c"></div>
<div class="t" style="left:1608px;top:1011px;color:#000;font-size:15px;line-height:19px;">小型机<span class="m" style="font-size:12.5px">-XG-NG</span></div>
<div class="t" style="left:1784px;top:1010px;color:#8b0000;font-size:16px;line-height:20px;font-family:'Liberation Mono',monospace;letter-spacing:-1.6px">2024-08-09 admin</div>
<div style="left:0px;top:1038px;width:1920px;height:3px;background:#cbcbcb"></div>
<div style="left:49px;top:1038px;width:285px;height:3px;background:#e6e6e6"></div>
<div style="left:633px;top:1038px;width:48px;height:3px;background:#e6e6e6"></div>
<div style="left:1897px;top:1038px;width:23px;height:3px;background:#e6e6e6"></div>
<div style="left:648px;top:450px;width:895.5px;height:588px;background:#f2f2f2;border-left:1px solid #5a5a5a;border-top:1px solid #7c7c7c;border-right:1px solid #6a6a6a;overflow:hidden;box-shadow:0 1px 13px rgba(0,0,0,.36)">
<div style="left:0px;top:0px;width:893.5px;height:30px;background:#fff"></div><div class="t" style="left:8.5px;top:6.5px;">单据引用参数配置</div><svg style="position:absolute;left:873.5px;top:8.5px" width="12" height="12" viewBox="0 0 12 12"><path d="M0.7 0.7L11.3 11.3M11.3 0.7L0.7 11.3" stroke="#222" stroke-width="1.2"/></svg><div class="t" style="left:23px;top:37.5px;">单据</div><div class="cmb" style="left:65px;top:35.5px;width:132px;height:18.5px;">质量检查</div><div class="cbtn" style="left:199.5px;top:35.5px;width:16.5px;height:18.5px;"></div><div class="t" style="left:23px;top:63px;">编码</div><div class="t s" style="left:64.5px;top:63px;">QA</div><div class="t" style="left:21px;top:89px;color:#0033cc;">引用界面脚本定义</div><div class="gb" style="left:3.5px;top:114px;width:221px;height:87.5px;"></div><div class="t q" style="left:13px;top:121.5px;">?</div><div class="cb" style="left:33px;top:124px;width:13px;height:13px;"></div><div class="t" style="left:48.5px;top:123px;">引用界面显示产品存量</div><div class="t" style="left:11px;top:151px;">限定仓库</div><div class="cmb" style="left:67.5px;top:149.5px;width:132.5px;height:18.5px;background:#eceefb;border-color:#e4e6f2"></div><div class="cbtn" style="left:202px;top:149.5px;width:17px;height:18.5px;"></div><div class="t" style="left:154px;top:182px;color:#0033cc;">应用生效</div><div style="left:9px;top:209.5px;width:187.5px;height:49.5px;background:#9fc8a0"></div><div style="left:10px;top:210.5px;width:16.5px;height:22.5px;background:#f5e6ef;color:#0a0aa0;text-align:center;line-height:23.5px">-</div><div style="left:27.5px;top:210.5px;width:168px;height:22.5px;background:#f1f1f1;color:#0a0aa0;text-align:center;line-height:24.5px">上级单据</div><div style="left:10px;top:234px;width:16.5px;height:24px;background:#f0f0f0;color:#00007f;text-align:center;font-size:11px;line-height:25px">&#9670;</div><div style="left:27.5px;top:234px;width:168px;height:24px;background:#5564ee;color:#fff;padding-left:3px;white-space:nowrap;line-height:26px">采购订单 <span class="s">AA/sup</span></div><div style="left:9px;top:380.5px;width:185.5px;height:49.5px;background:#9fc8a0"></div><div style="left:10px;top:381.5px;width:16.5px;height:22.5px;background:#f5e6ef;color:#0a0aa0;text-align:center;line-height:23.5px">-</div><div style="left:27.5px;top:381.5px;width:166px;height:22.5px;background:#f1f1f1;color:#0a0aa0;text-align:center;line-height:24.5px">下级单据</div><div style="left:10px;top:405px;width:16.5px;height:24px;background:#f0f0f0;color:#00007f;text-align:center;font-size:11px;line-height:25px">&#9670;</div><div style="left:27.5px;top:405px;width:166px;height:24px;background:#5564ee;color:#fff;padding-left:3px;white-space:nowrap;line-height:26px">采购收货 <span class="s">AB/sup</span></div><div class="t" style="left:251.5px;top:43px;">下级单据</div><div class="cmb" style="left:320.5px;top:40.5px;width:144px;height:18.5px;">采购收货</div><div class="cbtn" style="left:467px;top:40.5px;width:16.5px;height:18.5px;"></div><div class="t s" style="left:494px;top:43px;">AB</div><div class="t" style="left:546.5px;top:43px;">上级单据</div><div class="cmb" style="left:616px;top:40.5px;width:144px;height:18.5px;">质量检查</div><div class="cbtn" style="left:763px;top:40.5px;width:16.5px;height:18.5px;"></div><div class="t s" style="left:789.5px;top:43px;">QA</div><div class="cb" style="left:256px;top:76px;width:13px;height:13px;"></div><div class="t" style="left:271.5px;top:75px;">每条明细只引用一次</div><div class="cb" style="left:515px;top:76px;width:13px;height:13px;"><svg width="11" height="11" viewBox="0 0 11 11" style="position:absolute;left:0;top:0"><path d="M1.5 5.5L4.2 8.5L9.5 1.8" fill="none" stroke="#222" stroke-width="1.4"/></svg></div><div class="t" style="left:530.5px;top:75px;">上级单据已完成允许引用</div><div class="cb" style="left:756.5px;top:76px;width:13px;height:13px;"><svg width="11" height="11" viewBox="0 0 11 11" style="position:absolute;left:0;top:0"><path d="M1.5 5.5L4.2 8.5L9.5 1.8" fill="none" stroke="#222" stroke-width="1.4"/></svg></div><div class="t" style="left:772px;top:75px;">允许超额引用</div><div class="t q" style="left:240px;top:102px;">?</div><div class="cb" style="left:256px;top:103px;width:13px;height:13px;"><svg width="11" height="11" viewBox="0 0 11 11" style="position:absolute;left:0;top:0"><path d="M1.5 5.5L4.2 8.5L9.5 1.8" fill="none" stroke="#222" stroke-width="1.4"/></svg></div><div class="t" style="left:271.5px;top:102px;">引用完毕作为上级完成的依据</div><div class="t q" style="left:496px;top:102px;">?</div><div class="cb" style="left:515px;top:103px;width:13px;height:13px;"><svg width="11" height="11" viewBox="0 0 11 11" style="position:absolute;left:0;top:0"><path d="M1.5 5.5L4.2 8.5L9.5 1.8" fill="none" stroke="#222" stroke-width="1.4"/></svg></div><div class="t" style="left:530.5px;top:102px;">自动冲减上级单据对虚拟库存的影响</div><div class="cb" style="left:256px;top:130px;width:13px;height:13px;"></div><div class="t" style="left:271.5px;top:129px;">引用价格</div><div class="cb" style="left:515px;top:130px;width:13px;height:13px;"></div><div class="t" style="left:530.5px;top:129px;">限定客户</div><div class="cb" style="left:756.5px;top:130px;width:13px;height:13px;"></div><div class="t" style="left:772px;top:129px;">限定车间</div><div class="gb" style="left:256px;top:173.5px;width:629.5px;height:43.5px;"></div><div class="t" style="left:259.5px;top:164.5px;background:#f2f2f2;padding:0 3px">引用数据作为下级的产品选项</div><div class="t q" style="left:240px;top:166px;">?</div><div class="rb" style="left:263px;top:191px;width:13px;height:13px;"><i></i></div><div class="t" style="left:278.5px;top:190px;"><span class="s">N</span>下级的明细引用</div><div class="rb" style="left:470px;top:191px;width:13px;height:13px;"></div><div class="t" style="left:485.5px;top:190px;"><span class="s">Y</span>下级的主产品引用</div><div class="rb" style="left:677px;top:191px;width:13px;height:13px;"></div><div class="t" style="left:692.5px;top:190px;"><span class="s">A</span>明细和主产品同时引用</div><div class="gb" style="left:253.5px;top:245px;width:303px;height:44px;"></div><div class="t" style="left:258px;top:237px;background:#f2f2f2;padding:0 3px">引用上级单据的物资数据类型</div><div class="t q" style="left:240px;top:236.5px;">?</div><div class="rb" style="left:261px;top:263px;width:13px;height:13px;"><i></i></div><div class="t" style="left:276.5px;top:262px;">~不限制</div><div class="rb" style="left:359.5px;top:263px;width:13px;height:13px;"></div><div class="t" style="left:375px;top:262px;"><span class="s">A</span>合格品</div><div class="rb" style="left:457px;top:263px;width:13px;height:13px;"></div><div class="t" style="left:472.5px;top:262px;"><span class="s">B</span>次品</div><div class="gb" style="left:256px;top:312px;width:305px;height:43px;"></div><div class="t" style="left:259.5px;top:304px;background:#f2f2f2;padding:0 3px">供应商选项</div><div class="t q" style="left:240px;top:307px;">?</div><div class="rb" style="left:263px;top:329px;width:13px;height:13px;"><i></i></div><div class="t" style="left:278.5px;top:328px;">~无</div><div class="rb" style="left:362px;top:329px;width:13px;height:13px;"></div><div class="t" style="left:377.5px;top:328px;"><span class="s">A</span>限定</div><div class="rb" style="left:461.5px;top:329px;width:13px;height:13px;"></div><div class="t" style="left:477px;top:328px;"><span class="s">B</span>匹配明细</div><div class="gb" style="left:592.5px;top:312px;width:293px;height:43px;"></div><div class="t" style="left:596.5px;top:304px;background:#f2f2f2;padding:0 3px">仓库选项</div><div class="t q" style="left:574px;top:307px;">?</div><div class="rb" style="left:600px;top:329px;width:13px;height:13px;"><i></i></div><div class="t" style="left:615.5px;top:328px;">~无</div><div class="rb" style="left:694.5px;top:329px;width:13px;height:13px;"></div><div class="t" style="left:710px;top:328px;"><span class="s">A</span>限定-仓库1</div><div class="rb" style="left:788.5px;top:329px;width:13px;height:13px;"></div><div class="t" style="left:804px;top:328px;"><span class="s">B</span>限定-仓库2</div><div class="gb" style="left:256px;top:392px;width:302.5px;height:44.5px;"></div><div class="t" style="left:259.5px;top:384px;background:#f2f2f2;padding:0 3px">数量选项</div><div class="t q" style="left:240px;top:387px;">?</div><div class="rb" style="left:263px;top:410px;width:13px;height:13px;"><i></i></div><div class="t" style="left:278.5px;top:409px;">~不限制</div><div class="rb" style="left:361px;top:410px;width:13px;height:13px;"></div><div class="t" style="left:376.5px;top:409px;"><span class="s">A</span>正数</div><div class="rb" style="left:459.5px;top:410px;width:13px;height:13px;"></div><div class="t" style="left:475px;top:409px;"><span class="s">B</span>负数</div><div class="gb" style="left:592.5px;top:392px;width:293px;height:44.5px;"></div><div class="t" style="left:596.5px;top:384px;background:#f2f2f2;padding:0 3px">数量转换选项</div><div class="rb" style="left:600px;top:410px;width:13px;height:13px;"><i></i></div><div class="t" style="left:615.5px;top:409px;">~不转换</div><div class="rb" style="left:694.5px;top:410px;width:13px;height:13px;"></div><div class="t" style="left:710px;top:409px;"><span class="s">A</span>取反</div><div class="rb" style="left:788.5px;top:410px;width:13px;height:13px;"></div><div class="t" style="left:804px;top:409px;"><span class="s">B</span>取绝对值</div><div class="t q" style="left:239.5px;top:466px;">?</div><div class="t" style="left:258px;top:467px;">分组编号</div><div class="in" style="left:335.5px;top:465px;width:106.5px;height:20px;line-height:17px;"><span style="font-family:'Liberation Serif',serif;font-size:11px">QAAB</span></div><div class="t q" style="left:456px;top:466px;">?</div><div class="t" style="left:472.5px;top:467px;">限定单据天数</div><div class="in" style="left:571px;top:465px;width:44px;height:20px;line-height:17px;"><span style="font-size:11px">0</span></div><div class="t" style="left:648px;top:467px;">顺序号</div><div class="in" style="left:705.5px;top:465px;width:46.5px;height:20px;line-height:17px;"><span style="font-size:11px">0</span></div><div class="cb" style="left:685px;top:518.5px;width:13px;height:13px;"><svg width="11" height="11" viewBox="0 0 11 11" style="position:absolute;left:0;top:0"><path d="M1.5 5.5L4.2 8.5L9.5 1.8" fill="none" stroke="#222" stroke-width="1.4"/></svg></div><div class="t" style="left:700.5px;top:517.5px;">本规则处于有效状态</div><div class="t" style="left:713px;top:570.5px;color:#0033cc;">保存 <u>S</u></div><div class="t" style="left:807.5px;top:570.5px;color:#0033cc;">返回 <u>R</u></div>
</div>
<div style="left:293px;top:244px;width:298px;height:93px;border:7px solid #fa3535"></div>
<div style="left:875px;top:536px;width:237px;height:39px;border:7px solid #fa3535"></div>
<div class="call" style="left:745px;top:726px;width:674px;height:47.5px;">质检引用上级单据， 采购订单状态不能自动设置为完成</div>
<div class="call" style="left:746px;top:788.5px;width:701px;height:47px;">采购收货 引用上级质检单，质检单也不能自动设置为完成</div>
<svg style="position:absolute;left:739px;top:743px" width="7" height="14" viewBox="0 0 7 14"><path d="M7 0L0 7L7 14Z" fill="rgba(60,60,60,.81)"/></svg>
<svg style="position:absolute;left:740px;top:805px" width="7" height="14" viewBox="0 0 7 14"><path d="M7 0L0 7L7 14Z" fill="rgba(60,60,60,.81)"/></svg>
<div class="num" style="left:716px;top:740px;width:20px;height:20px;">1</div>
<div class="num" style="left:717px;top:802px;width:20px;height:20px;">2</div>
<svg style="position:absolute;left:0;top:0" width="1920" height="1041" viewBox="0 0 1920 1041"><polygon points="484.7,351.6 680.2,747.9 676.4,749.8 696,764.5 695.6,740 691.8,742 485.3,351.4" fill="#fa3535"/><polygon points="943.4,581.9 794.9,723.3 791.7,720.1 784.6,742.6 807,735.3 803.8,732.1 943.6,582.1" fill="#fa3535"/></svg>

</body></html>
